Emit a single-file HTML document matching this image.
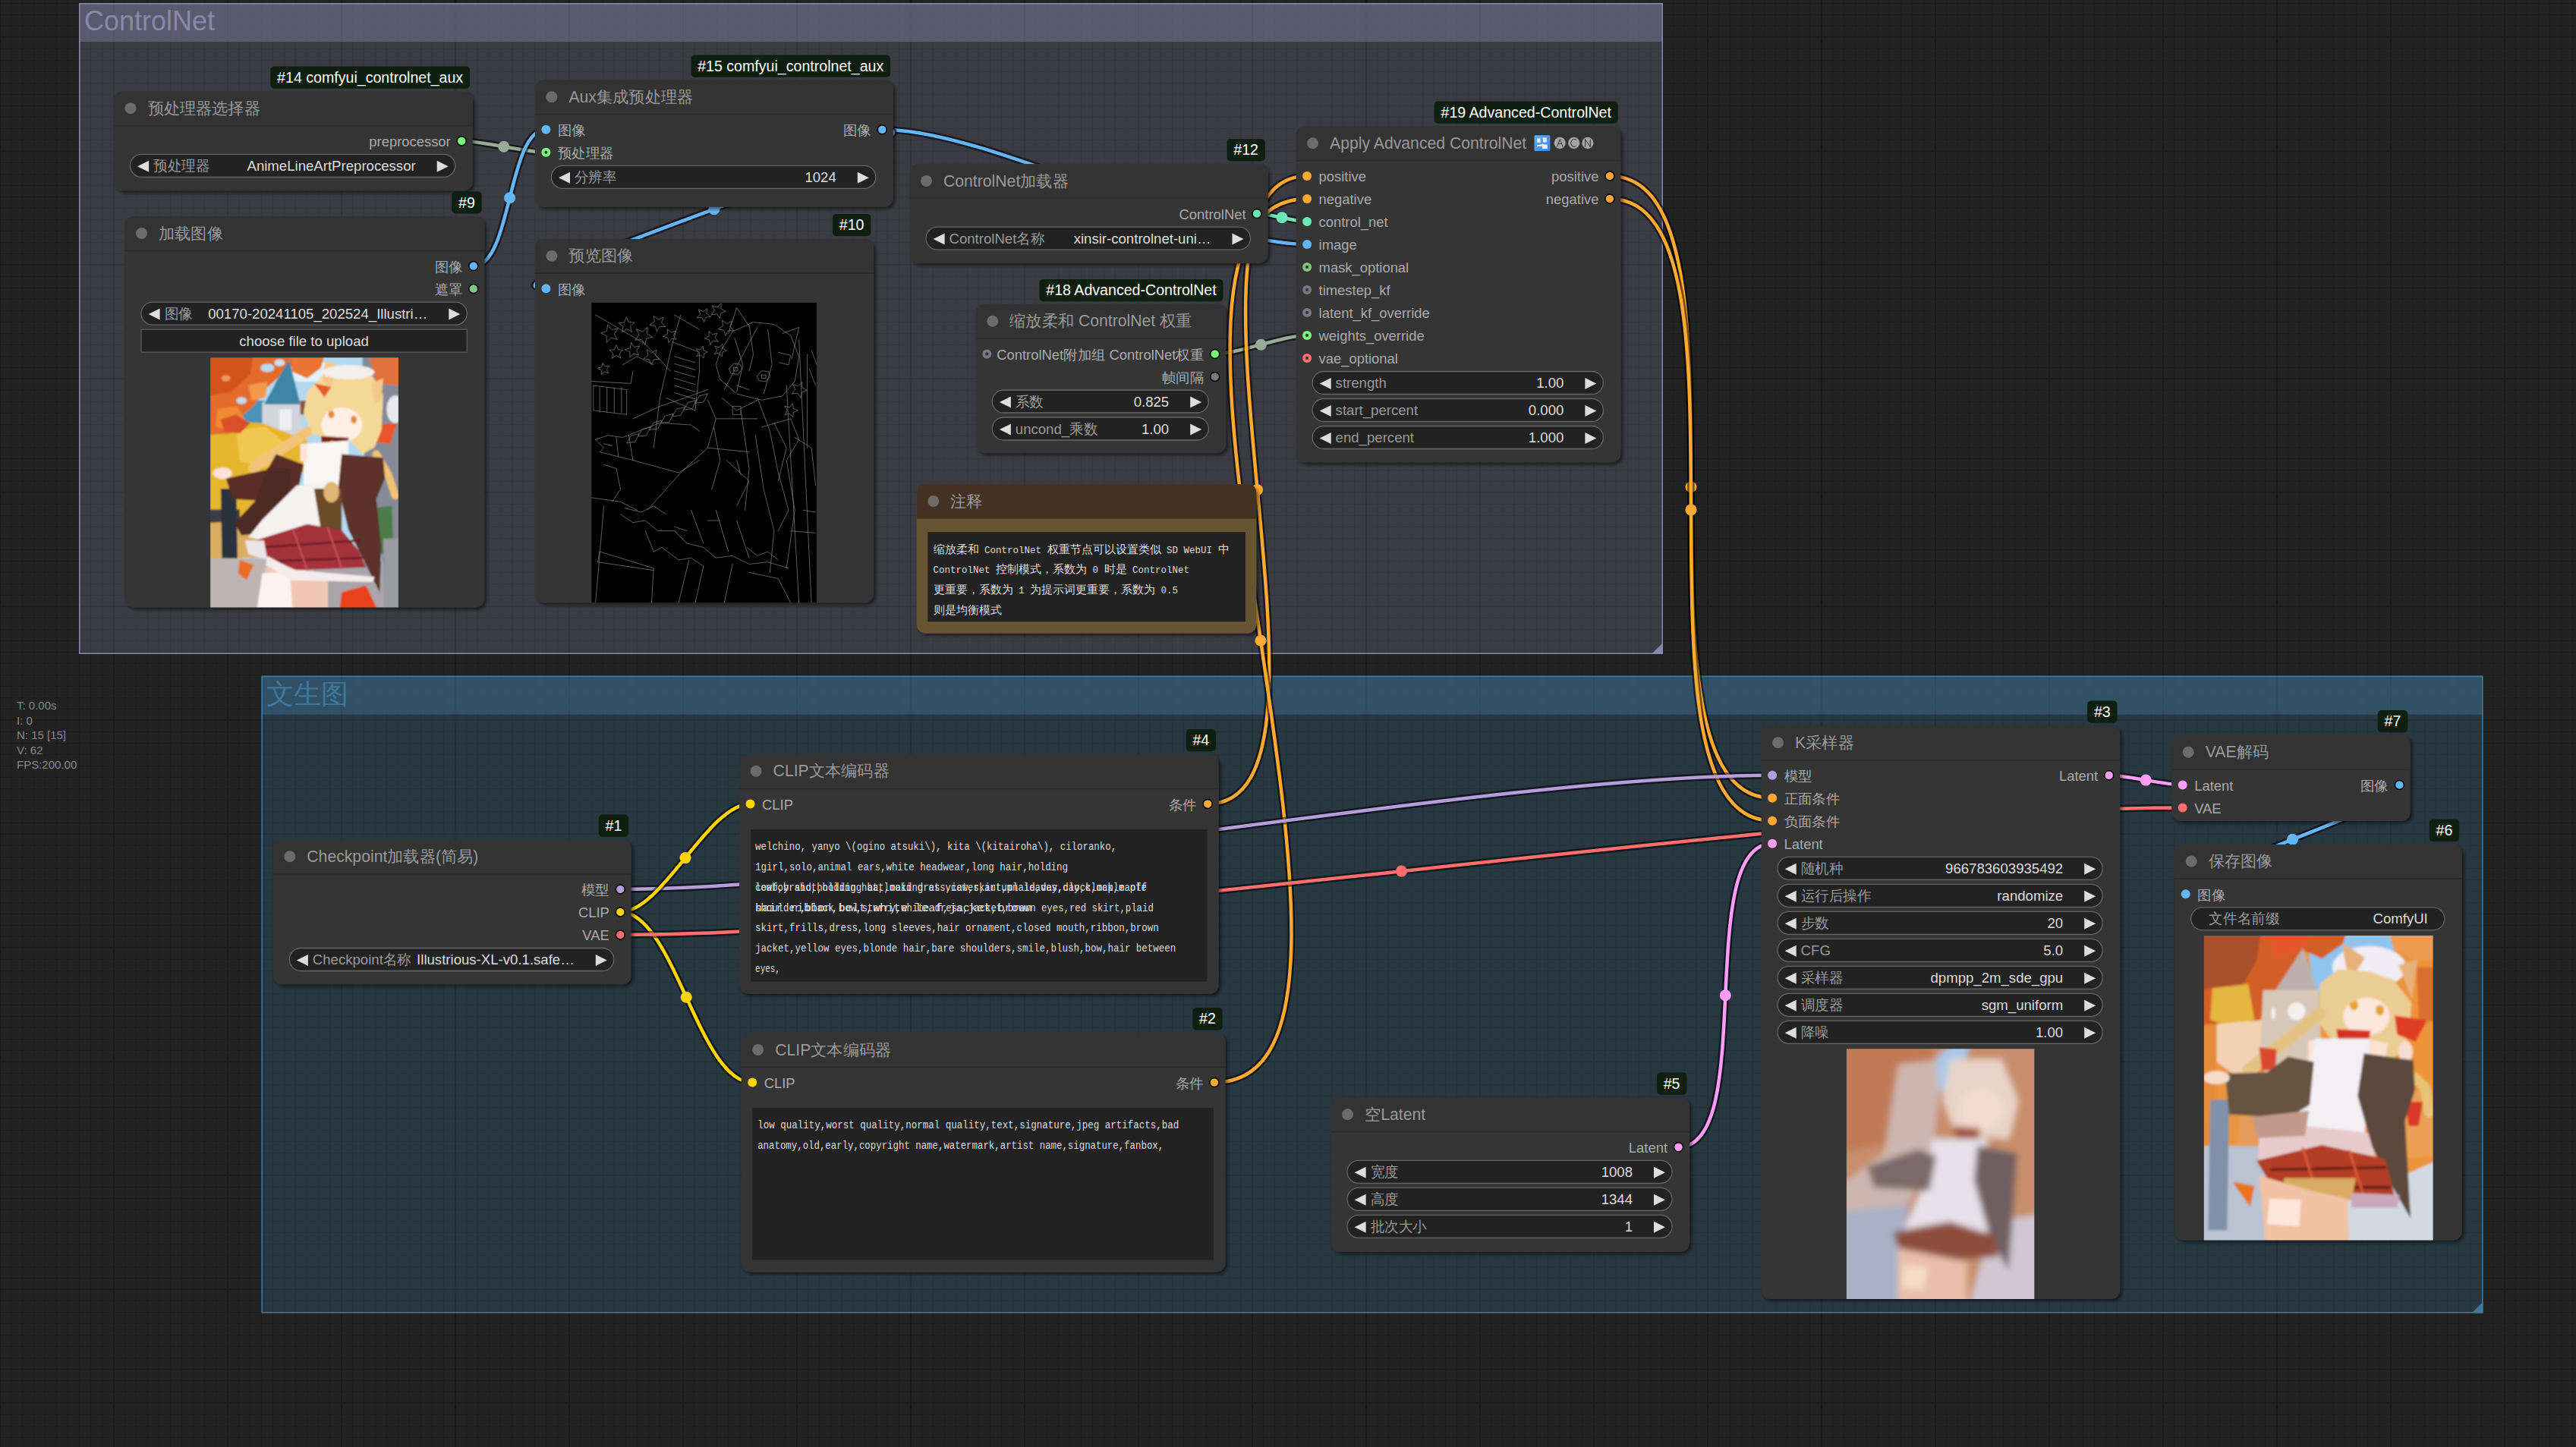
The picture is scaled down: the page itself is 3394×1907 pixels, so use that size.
<!DOCTYPE html><html><head><meta charset="utf-8"><title>ComfyUI</title><style>html,body{margin:0;padding:0;background:#222;overflow:hidden;width:3394px;height:1907px}svg{display:block}</style></head><body>
<svg width="3394" height="1907" viewBox="0 0 3394 1907">
<defs>
<pattern id="gmin" width="15" height="15" patternUnits="userSpaceOnUse" x="0" y="4"><rect x="14" y="0" width="1" height="15" fill="#1d1d1d"/><rect x="0" y="0" width="15" height="1" fill="#1d1d1d"/></pattern>
<pattern id="gmaj" width="150" height="150" patternUnits="userSpaceOnUse" x="-1" y="48"><rect x="0" y="0" width="2" height="150" fill="#1a1a1a"/><rect x="0" y="0" width="150" height="2" fill="#1a1a1a"/></pattern>
<filter id="sh" x="-10%" y="-15%" width="120%" height="130%"><feDropShadow dx="3" dy="3" stdDeviation="2.2" flood-color="#000" flood-opacity="0.5"/></filter>
</defs>
<rect width="3394" height="1907" fill="#222"/>
<rect width="3394" height="1907" fill="url(#gmin)"/>
<rect width="3394" height="1907" fill="url(#gmaj)"/>
<rect x="104" y="4" width="2087" height="858" fill="#8888AA" fill-opacity="0.25"/>
<rect x="104" y="4" width="2087" height="51" fill="#8888AA" fill-opacity="0.41"/>
<rect x="104.75" y="4.75" width="2085.5" height="856.5" fill="none" stroke="#8888AA" stroke-width="1.5"/>
<path d="M2191 847 L2191 862 L2176 862 Z" fill="#8888AA"/>
<text x="111.0" y="40.0" font-size="36" fill="#8888AA" font-family='"Liberation Sans", sans-serif'>ControlNet</text>
<rect x="344.3" y="890.6" width="2927.2" height="839.9" fill="#3f789e" fill-opacity="0.25"/>
<rect x="344.3" y="890.6" width="2927.2" height="51.10000000000002" fill="#3f789e" fill-opacity="0.41"/>
<rect x="345.05" y="891.35" width="2925.7" height="838.4" fill="none" stroke="#3f789e" stroke-width="1.5"/>
<path d="M3271.5 1715.5 L3271.5 1730.5 L3256.5 1730.5 Z" fill="#3f789e"/>
<text x="351.3" y="926.6" font-size="36" fill="#3f789e" font-family='"Liberation Sans", sans-serif'><tspan textLength="108.0" lengthAdjust="spacingAndGlyphs">文生图</tspan></text>
<text x="22.0" y="935.0" font-size="15" fill="#888" font-family='"Liberation Sans", sans-serif'>T: 0.00s</text>
<text x="22.0" y="954.5" font-size="15" fill="#888" font-family='"Liberation Sans", sans-serif'>I: 0</text>
<text x="22.0" y="974.0" font-size="15" fill="#888" font-family='"Liberation Sans", sans-serif'>N: 15 [15]</text>
<text x="22.0" y="993.5" font-size="15" fill="#888" font-family='"Liberation Sans", sans-serif'>V: 62</text>
<text x="22.0" y="1013.0" font-size="15" fill="#888" font-family='"Liberation Sans", sans-serif'>FPS:200.00</text>
<path d="M608.2 185.8 C636.3 185.8 691.3 200.8 719.4 200.8" fill="none" stroke="#000" stroke-opacity="0.55" stroke-width="9.5"/>
<path d="M608.2 185.8 C636.3 185.8 691.3 200.8 719.4 200.8" fill="none" stroke="#9A9" stroke-width="4.5"/>
<circle cx="663.8" cy="193.3" r="7.5" fill="#9A9"/>
<path d="M623.8 350.6 C674.7 350.6 668.5 170.8 719.4 170.8" fill="none" stroke="#000" stroke-opacity="0.55" stroke-width="9.5"/>
<path d="M623.8 350.6 C674.7 350.6 668.5 170.8 719.4 170.8" fill="none" stroke="#64B5F6" stroke-width="4.5"/>
<circle cx="671.6" cy="260.7" r="7.5" fill="#64B5F6"/>
<path d="M1162.3 170.8 C1307.3 170.8 1577.1 321.9 1722.1 321.9" fill="none" stroke="#000" stroke-opacity="0.55" stroke-width="9.5"/>
<path d="M1162.3 170.8 C1307.3 170.8 1577.1 321.9 1722.1 321.9" fill="none" stroke="#64B5F6" stroke-width="4.5"/>
<circle cx="1442.2" cy="246.4" r="7.5" fill="#64B5F6"/>
<path d="M1162.3 170.8 C1284.8 170.8 596.9 380.3 719.4 380.3" fill="none" stroke="#000" stroke-opacity="0.55" stroke-width="9.5"/>
<path d="M1162.3 170.8 C1284.8 170.8 596.9 380.3 719.4 380.3" fill="none" stroke="#64B5F6" stroke-width="4.5"/>
<circle cx="940.9" cy="275.6" r="7.5" fill="#64B5F6"/>
<path d="M1656.0 281.5 C1672.7 281.5 1705.4 291.9 1722.1 291.9" fill="none" stroke="#000" stroke-opacity="0.55" stroke-width="9.5"/>
<path d="M1656.0 281.5 C1672.7 281.5 1705.4 291.9 1722.1 291.9" fill="none" stroke="#6EE7B7" stroke-width="4.5"/>
<circle cx="1689.0" cy="286.7" r="7.5" fill="#6EE7B7"/>
<path d="M1600.7 466.4 C1631.7 466.4 1691.1 441.9 1722.1 441.9" fill="none" stroke="#000" stroke-opacity="0.55" stroke-width="9.5"/>
<path d="M1600.7 466.4 C1631.7 466.4 1691.1 441.9 1722.1 441.9" fill="none" stroke="#9A9" stroke-width="4.5"/>
<circle cx="1661.4" cy="454.2" r="7.5" fill="#9A9"/>
<path d="M1591.2 1059.4 C1800.6 1059.4 1512.7 231.9 1722.1 231.9" fill="none" stroke="#000" stroke-opacity="0.55" stroke-width="9.5"/>
<path d="M1591.2 1059.4 C1800.6 1059.4 1512.7 231.9 1722.1 231.9" fill="none" stroke="#FFA931" stroke-width="4.5"/>
<circle cx="1656.6" cy="645.6" r="7.5" fill="#FFA931"/>
<path d="M1599.9 1426.5 C1892.6 1426.5 1429.4 261.9 1722.1 261.9" fill="none" stroke="#000" stroke-opacity="0.55" stroke-width="9.5"/>
<path d="M1599.9 1426.5 C1892.6 1426.5 1429.4 261.9 1722.1 261.9" fill="none" stroke="#FFA931" stroke-width="4.5"/>
<circle cx="1661.0" cy="844.2" r="7.5" fill="#FFA931"/>
<path d="M2120.9 231.9 C2332.8 231.9 2123.2 1051.8 2335.1 1051.8" fill="none" stroke="#000" stroke-opacity="0.55" stroke-width="9.5"/>
<path d="M2120.9 231.9 C2332.8 231.9 2123.2 1051.8 2335.1 1051.8" fill="none" stroke="#FFA931" stroke-width="4.5"/>
<circle cx="2228.0" cy="641.8" r="7.5" fill="#FFA931"/>
<path d="M2120.9 261.9 C2332.8 261.9 2123.2 1081.8 2335.1 1081.8" fill="none" stroke="#000" stroke-opacity="0.55" stroke-width="9.5"/>
<path d="M2120.9 261.9 C2332.8 261.9 2123.2 1081.8 2335.1 1081.8" fill="none" stroke="#FFA931" stroke-width="4.5"/>
<circle cx="2228.0" cy="671.9" r="7.5" fill="#FFA931"/>
<path d="M817.3 1171.9 C1198.6 1171.9 1953.8 1021.8 2335.1 1021.8" fill="none" stroke="#000" stroke-opacity="0.55" stroke-width="9.5"/>
<path d="M817.3 1171.9 C1198.6 1171.9 1953.8 1021.8 2335.1 1021.8" fill="none" stroke="#B39DDB" stroke-width="4.5"/>
<circle cx="1576.2" cy="1096.8" r="7.5" fill="#B39DDB"/>
<path d="M817.3 1201.9 C873.0 1201.9 932.9 1059.4 988.6 1059.4" fill="none" stroke="#000" stroke-opacity="0.55" stroke-width="9.5"/>
<path d="M817.3 1201.9 C873.0 1201.9 932.9 1059.4 988.6 1059.4" fill="none" stroke="#FFD500" stroke-width="4.5"/>
<circle cx="903.0" cy="1130.6" r="7.5" fill="#FFD500"/>
<path d="M817.3 1201.9 C888.3 1201.9 920.2 1426.5 991.2 1426.5" fill="none" stroke="#000" stroke-opacity="0.55" stroke-width="9.5"/>
<path d="M817.3 1201.9 C888.3 1201.9 920.2 1426.5 991.2 1426.5" fill="none" stroke="#FFD500" stroke-width="4.5"/>
<circle cx="904.2" cy="1314.2" r="7.5" fill="#FFD500"/>
<path d="M817.3 1231.9 C1333.6 1231.9 2359.4 1064.4 2875.7 1064.4" fill="none" stroke="#000" stroke-opacity="0.55" stroke-width="9.5"/>
<path d="M817.3 1231.9 C1333.6 1231.9 2359.4 1064.4 2875.7 1064.4" fill="none" stroke="#FF6E6E" stroke-width="4.5"/>
<circle cx="1846.5" cy="1148.1" r="7.5" fill="#FF6E6E"/>
<path d="M2211.5 1511.8 C2316.2 1511.8 2230.4 1111.8 2335.1 1111.8" fill="none" stroke="#000" stroke-opacity="0.55" stroke-width="9.5"/>
<path d="M2211.5 1511.8 C2316.2 1511.8 2230.4 1111.8 2335.1 1111.8" fill="none" stroke="#FF9CF9" stroke-width="4.5"/>
<circle cx="2273.3" cy="1311.8" r="7.5" fill="#FF9CF9"/>
<path d="M2778.7 1021.8 C2803.2 1021.8 2851.2 1034.4 2875.7 1034.4" fill="none" stroke="#000" stroke-opacity="0.55" stroke-width="9.5"/>
<path d="M2778.7 1021.8 C2803.2 1021.8 2851.2 1034.4 2875.7 1034.4" fill="none" stroke="#FF9CF9" stroke-width="4.5"/>
<circle cx="2827.2" cy="1028.1" r="7.5" fill="#FF9CF9"/>
<path d="M3161.4 1034.4 C3240.5 1034.4 2800.6 1178.2 2879.7 1178.2" fill="none" stroke="#000" stroke-opacity="0.55" stroke-width="9.5"/>
<path d="M3161.4 1034.4 C3240.5 1034.4 2800.6 1178.2 2879.7 1178.2" fill="none" stroke="#64B5F6" stroke-width="4.5"/>
<circle cx="3020.5" cy="1106.3" r="7.5" fill="#64B5F6"/>
<g filter="url(#sh)"><rect x="150" y="120.5" width="472.7" height="130.9" rx="12" fill="#353535"/></g>
<path d="M150 165.5 L150 132.5 Q150 120.5 162 120.5 L610.7 120.5 Q622.7 120.5 622.7 132.5 L622.7 165.5 Z" fill="#333"/>
<rect x="150" y="165.0" width="472.7" height="1.5" fill="#2b2b2b"/>
<circle cx="172" cy="142.7" r="7.5" fill="#6b6b6b"/>
<text x="194.5" y="149.8" font-size="21.2" fill="#999" font-family='"Liberation Sans", sans-serif'><tspan textLength="148.4" lengthAdjust="spacingAndGlyphs">预处理器选择器</tspan></text>
<circle cx="608.2" cy="185.8" r="6" fill="#7F7" stroke="#000" stroke-width="1.5"/>
<text x="593.7" y="193.1" font-size="18.4" fill="#AAA" text-anchor="end" font-family='"Liberation Sans", sans-serif'>preprocessor</text>
<rect x="171.5" y="203.4" width="428.2" height="30" rx="15" fill="#222" stroke="#666" stroke-width="1.3"/>
<path d="M181.1 219.3 L196.1 211.8 L196.1 226.8 Z" fill="#DDD"/>
<path d="M590.7 219.3 L575.7 211.8 L575.7 226.8 Z" fill="#DDD"/>
<text x="202.0" y="224.9" font-size="18.6" fill="#999" font-family='"Liberation Sans", sans-serif'><tspan textLength="74.4" lengthAdjust="spacingAndGlyphs">预处理器</tspan></text>
<text x="547.7" y="224.9" font-size="18.6" fill="#DDD" text-anchor="end" font-family='"Liberation Sans", sans-serif'>AnimeLineArtPreprocessor</text>
<rect x="356.3" y="87.4" width="262.7" height="29.3" rx="5" fill="#0F1F0F"/>
<text x="365.1" y="108.7" font-size="19.6" fill="#FFF" font-family='"Liberation Sans", sans-serif'>#14 comfyui_controlnet_aux</text>
<g filter="url(#sh)"><rect x="164.5" y="285.3" width="473.8" height="515.1" rx="12" fill="#353535"/></g>
<path d="M164.5 330.3 L164.5 297.3 Q164.5 285.3 176.5 285.3 L626.3 285.3 Q638.3 285.3 638.3 297.3 L638.3 330.3 Z" fill="#333"/>
<rect x="164.5" y="329.8" width="473.8" height="1.5" fill="#2b2b2b"/>
<circle cx="186.5" cy="307.5" r="7.5" fill="#6b6b6b"/>
<text x="209.0" y="314.6" font-size="21.2" fill="#999" font-family='"Liberation Sans", sans-serif'><tspan textLength="84.8" lengthAdjust="spacingAndGlyphs">加载图像</tspan></text>
<circle cx="623.8" cy="350.6" r="6" fill="#64B5F6" stroke="#000" stroke-width="1.5"/>
<text x="609.3" y="357.9" font-size="18.4" fill="#AAA" text-anchor="end" font-family='"Liberation Sans", sans-serif'><tspan textLength="36.8" lengthAdjust="spacingAndGlyphs">图像</tspan></text>
<circle cx="623.8" cy="380.6" r="6" fill="#81C784" stroke="#000" stroke-width="1.5"/>
<text x="609.3" y="387.9" font-size="18.4" fill="#AAA" text-anchor="end" font-family='"Liberation Sans", sans-serif'><tspan textLength="36.8" lengthAdjust="spacingAndGlyphs">遮罩</tspan></text>
<rect x="186.0" y="398.2" width="429.3" height="30" rx="15" fill="#222" stroke="#666" stroke-width="1.3"/>
<path d="M195.6 414.1 L210.6 406.6 L210.6 421.6 Z" fill="#DDD"/>
<path d="M606.3 414.1 L591.3 406.6 L591.3 421.6 Z" fill="#DDD"/>
<text x="216.5" y="419.7" font-size="18.6" fill="#999" font-family='"Liberation Sans", sans-serif'><tspan textLength="37.2" lengthAdjust="spacingAndGlyphs">图像</tspan></text>
<text x="563.3" y="419.7" font-size="18.6" fill="#DDD" text-anchor="end" font-family='"Liberation Sans", sans-serif'>00170-20241105_202524_Illustri…</text>
<rect x="186.0" y="434.2" width="429.3" height="30" fill="#222" stroke="#555" stroke-width="1.5"/>
<text x="400.6" y="455.7" font-size="18.6" fill="#DDD" text-anchor="middle" font-family='"Liberation Sans", sans-serif'>choose file to upload</text>
<rect x="595.2" y="252.2" width="39.4" height="29.3" rx="5" fill="#0F1F0F"/>
<text x="604.0" y="273.5" font-size="19.6" fill="#FFF" font-family='"Liberation Sans", sans-serif'>#9</text>
<g filter="url(#sh)"><rect x="704.9" y="105.5" width="471.9" height="167.2" rx="12" fill="#353535"/></g>
<path d="M704.9 150.5 L704.9 117.5 Q704.9 105.5 716.9 105.5 L1164.8 105.5 Q1176.8 105.5 1176.8 117.5 L1176.8 150.5 Z" fill="#333"/>
<rect x="704.9" y="150.0" width="471.9" height="1.5" fill="#2b2b2b"/>
<circle cx="726.9" cy="127.7" r="7.5" fill="#6b6b6b"/>
<text x="749.4" y="134.8" font-size="21.2" fill="#999" font-family='"Liberation Sans", sans-serif'>Aux<tspan textLength="127.2" lengthAdjust="spacingAndGlyphs">集成预处理器</tspan></text>
<circle cx="719.4" cy="170.8" r="6" fill="#64B5F6"/>
<text x="734.9" y="178.1" font-size="18.4" fill="#AAA" font-family='"Liberation Sans", sans-serif'><tspan textLength="36.8" lengthAdjust="spacingAndGlyphs">图像</tspan></text>
<circle cx="719.4" cy="200.8" r="6" fill="#7F7"/><circle cx="719.4" cy="200.8" r="2.1" fill="#353535"/>
<text x="734.9" y="208.1" font-size="18.4" fill="#AAA" font-family='"Liberation Sans", sans-serif'><tspan textLength="73.6" lengthAdjust="spacingAndGlyphs">预处理器</tspan></text>
<circle cx="1162.3" cy="170.8" r="6" fill="#64B5F6" stroke="#000" stroke-width="1.5"/>
<text x="1147.8" y="178.1" font-size="18.4" fill="#AAA" text-anchor="end" font-family='"Liberation Sans", sans-serif'><tspan textLength="36.8" lengthAdjust="spacingAndGlyphs">图像</tspan></text>
<rect x="726.4" y="218.4" width="427.4" height="30" rx="15" fill="#222" stroke="#666" stroke-width="1.3"/>
<path d="M736.0 234.3 L751.0 226.8 L751.0 241.8 Z" fill="#DDD"/>
<path d="M1144.8 234.3 L1129.8 226.8 L1129.8 241.8 Z" fill="#DDD"/>
<text x="756.9" y="239.9" font-size="18.6" fill="#999" font-family='"Liberation Sans", sans-serif'><tspan textLength="55.8" lengthAdjust="spacingAndGlyphs">分辨率</tspan></text>
<text x="1101.8" y="239.9" font-size="18.6" fill="#DDD" text-anchor="end" font-family='"Liberation Sans", sans-serif'>1024</text>
<rect x="910.4" y="72.4" width="262.7" height="29.3" rx="5" fill="#0F1F0F"/>
<text x="919.2" y="93.7" font-size="19.6" fill="#FFF" font-family='"Liberation Sans", sans-serif'>#15 comfyui_controlnet_aux</text>
<g filter="url(#sh)"><rect x="704.9" y="315" width="446.1" height="479.6" rx="12" fill="#353535"/></g>
<path d="M704.9 360 L704.9 327 Q704.9 315 716.9 315 L1139 315 Q1151 315 1151 327 L1151 360 Z" fill="#333"/>
<rect x="704.9" y="359.5" width="446.1" height="1.5" fill="#2b2b2b"/>
<circle cx="726.9" cy="337.2" r="7.5" fill="#6b6b6b"/>
<text x="749.4" y="344.3" font-size="21.2" fill="#999" font-family='"Liberation Sans", sans-serif'><tspan textLength="84.8" lengthAdjust="spacingAndGlyphs">预览图像</tspan></text>
<circle cx="719.4" cy="380.3" r="6" fill="#64B5F6"/>
<text x="734.9" y="387.6" font-size="18.4" fill="#AAA" font-family='"Liberation Sans", sans-serif'><tspan textLength="36.8" lengthAdjust="spacingAndGlyphs">图像</tspan></text>
<rect x="1097.0" y="281.9" width="50.3" height="29.3" rx="5" fill="#0F1F0F"/>
<text x="1105.8" y="303.2" font-size="19.6" fill="#FFF" font-family='"Liberation Sans", sans-serif'>#10</text>
<g filter="url(#sh)"><rect x="1198.5" y="216.2" width="472.0" height="130.8" rx="12" fill="#353535"/></g>
<path d="M1198.5 261.2 L1198.5 228.2 Q1198.5 216.2 1210.5 216.2 L1658.5 216.2 Q1670.5 216.2 1670.5 228.2 L1670.5 261.2 Z" fill="#333"/>
<rect x="1198.5" y="260.7" width="472.0" height="1.5" fill="#2b2b2b"/>
<circle cx="1220.5" cy="238.39999999999998" r="7.5" fill="#6b6b6b"/>
<text x="1243.0" y="245.5" font-size="21.2" fill="#999" font-family='"Liberation Sans", sans-serif'>ControlNet<tspan textLength="63.6" lengthAdjust="spacingAndGlyphs">加载器</tspan></text>
<circle cx="1656.0" cy="281.5" r="6" fill="#6EE7B7" stroke="#000" stroke-width="1.5"/>
<text x="1641.5" y="288.8" font-size="18.4" fill="#AAA" text-anchor="end" font-family='"Liberation Sans", sans-serif'>ControlNet</text>
<rect x="1220.0" y="299.1" width="427.5" height="30" rx="15" fill="#222" stroke="#666" stroke-width="1.3"/>
<path d="M1229.6 315.0 L1244.6 307.5 L1244.6 322.5 Z" fill="#DDD"/>
<path d="M1638.5 315.0 L1623.5 307.5 L1623.5 322.5 Z" fill="#DDD"/>
<text x="1250.5" y="320.6" font-size="18.6" fill="#999" font-family='"Liberation Sans", sans-serif'>ControlNet<tspan textLength="37.2" lengthAdjust="spacingAndGlyphs">名称</tspan></text>
<text x="1595.5" y="320.6" font-size="18.6" fill="#DDD" text-anchor="end" font-family='"Liberation Sans", sans-serif'>xinsir-controlnet-uni…</text>
<rect x="1616.5" y="183.1" width="50.3" height="29.3" rx="5" fill="#0F1F0F"/>
<text x="1625.3" y="204.4" font-size="19.6" fill="#FFF" font-family='"Liberation Sans", sans-serif'>#12</text>
<g filter="url(#sh)"><rect x="1285.8" y="401.1" width="329.4" height="196.2" rx="12" fill="#353535"/></g>
<path d="M1285.8 446.1 L1285.8 413.1 Q1285.8 401.1 1297.8 401.1 L1603.2 401.1 Q1615.2 401.1 1615.2 413.1 L1615.2 446.1 Z" fill="#333"/>
<rect x="1285.8" y="445.6" width="329.4" height="1.5" fill="#2b2b2b"/>
<circle cx="1307.8" cy="423.3" r="7.5" fill="#6b6b6b"/>
<text x="1330.3" y="430.4" font-size="21.2" fill="#999" font-family='"Liberation Sans", sans-serif'><tspan textLength="84.8" lengthAdjust="spacingAndGlyphs">缩放柔和</tspan> ControlNet <tspan textLength="42.4" lengthAdjust="spacingAndGlyphs">权重</tspan></text>
<circle cx="1300.3" cy="466.4" r="6" fill="#778"/><circle cx="1300.3" cy="466.4" r="2.1" fill="#353535"/>
<circle cx="1600.7" cy="466.4" r="6" fill="#7F7" stroke="#000" stroke-width="1.5"/>
<text x="1586.2" y="473.7" font-size="18.4" fill="#AAA" text-anchor="end" font-family='"Liberation Sans", sans-serif'>ControlNet<tspan textLength="55.2" lengthAdjust="spacingAndGlyphs">附加组</tspan> ControlNet<tspan textLength="36.8" lengthAdjust="spacingAndGlyphs">权重</tspan></text>
<circle cx="1600.7" cy="496.4" r="6" fill="#778" stroke="#000" stroke-width="1.5"/>
<text x="1586.2" y="503.7" font-size="18.4" fill="#AAA" text-anchor="end" font-family='"Liberation Sans", sans-serif'><tspan textLength="55.2" lengthAdjust="spacingAndGlyphs">帧间隔</tspan></text>
<rect x="1307.3" y="514.0" width="284.9" height="30" rx="15" fill="#222" stroke="#666" stroke-width="1.3"/>
<path d="M1316.9 529.9 L1331.9 522.4 L1331.9 537.4 Z" fill="#DDD"/>
<path d="M1583.2 529.9 L1568.2 522.4 L1568.2 537.4 Z" fill="#DDD"/>
<text x="1337.8" y="535.5" font-size="18.6" fill="#999" font-family='"Liberation Sans", sans-serif'><tspan textLength="37.2" lengthAdjust="spacingAndGlyphs">系数</tspan></text>
<text x="1540.2" y="535.5" font-size="18.6" fill="#DDD" text-anchor="end" font-family='"Liberation Sans", sans-serif'>0.825</text>
<rect x="1307.3" y="550.0" width="284.9" height="30" rx="15" fill="#222" stroke="#666" stroke-width="1.3"/>
<path d="M1316.9 565.9 L1331.9 558.4 L1331.9 573.4 Z" fill="#DDD"/>
<path d="M1583.2 565.9 L1568.2 558.4 L1568.2 573.4 Z" fill="#DDD"/>
<text x="1337.8" y="571.5" font-size="18.6" fill="#999" font-family='"Liberation Sans", sans-serif'>uncond_<tspan textLength="37.2" lengthAdjust="spacingAndGlyphs">乘数</tspan></text>
<text x="1540.2" y="571.5" font-size="18.6" fill="#DDD" text-anchor="end" font-family='"Liberation Sans", sans-serif'>1.00</text>
<rect x="1369.5" y="368.0" width="242.0" height="29.3" rx="5" fill="#0F1F0F"/>
<text x="1378.3" y="389.3" font-size="19.6" fill="#FFF" font-family='"Liberation Sans", sans-serif'>#18 Advanced-ControlNet</text>
<g filter="url(#sh)"><rect x="1707.6" y="166.6" width="427.8" height="443.0" rx="12" fill="#353535"/></g>
<path d="M1707.6 211.6 L1707.6 178.6 Q1707.6 166.6 1719.6 166.6 L2123.4 166.6 Q2135.4 166.6 2135.4 178.6 L2135.4 211.6 Z" fill="#333"/>
<rect x="1707.6" y="211.1" width="427.8" height="1.5" fill="#2b2b2b"/>
<circle cx="1729.6" cy="188.79999999999998" r="7.5" fill="#6b6b6b"/>
<text x="1752.1" y="195.9" font-size="21.2" fill="#999" font-family='"Liberation Sans", sans-serif'>Apply Advanced ControlNet</text>
<circle cx="1722.1" cy="231.9" r="6" fill="#FFA931"/>
<text x="1737.6" y="239.2" font-size="18.4" fill="#AAA" font-family='"Liberation Sans", sans-serif'>positive</text>
<circle cx="1722.1" cy="261.9" r="6" fill="#FFA931"/>
<text x="1737.6" y="269.2" font-size="18.4" fill="#AAA" font-family='"Liberation Sans", sans-serif'>negative</text>
<circle cx="1722.1" cy="291.9" r="6" fill="#6EE7B7"/>
<text x="1737.6" y="299.2" font-size="18.4" fill="#AAA" font-family='"Liberation Sans", sans-serif'>control_net</text>
<circle cx="1722.1" cy="321.9" r="6" fill="#64B5F6"/>
<text x="1737.6" y="329.2" font-size="18.4" fill="#AAA" font-family='"Liberation Sans", sans-serif'>image</text>
<circle cx="1722.1" cy="351.9" r="6" fill="#81C784"/><circle cx="1722.1" cy="351.9" r="2.1" fill="#353535"/>
<text x="1737.6" y="359.2" font-size="18.4" fill="#AAA" font-family='"Liberation Sans", sans-serif'>mask_optional</text>
<circle cx="1722.1" cy="381.9" r="6" fill="#778"/><circle cx="1722.1" cy="381.9" r="2.1" fill="#353535"/>
<text x="1737.6" y="389.2" font-size="18.4" fill="#AAA" font-family='"Liberation Sans", sans-serif'>timestep_kf</text>
<circle cx="1722.1" cy="411.9" r="6" fill="#778"/><circle cx="1722.1" cy="411.9" r="2.1" fill="#353535"/>
<text x="1737.6" y="419.2" font-size="18.4" fill="#AAA" font-family='"Liberation Sans", sans-serif'>latent_kf_override</text>
<circle cx="1722.1" cy="441.9" r="6" fill="#7F7"/><circle cx="1722.1" cy="441.9" r="2.1" fill="#353535"/>
<text x="1737.6" y="449.2" font-size="18.4" fill="#AAA" font-family='"Liberation Sans", sans-serif'>weights_override</text>
<circle cx="1722.1" cy="471.9" r="6" fill="#FF6E6E"/><circle cx="1722.1" cy="471.9" r="2.1" fill="#353535"/>
<text x="1737.6" y="479.2" font-size="18.4" fill="#AAA" font-family='"Liberation Sans", sans-serif'>vae_optional</text>
<circle cx="2120.9" cy="231.9" r="6" fill="#FFA931" stroke="#000" stroke-width="1.5"/>
<text x="2106.4" y="239.2" font-size="18.4" fill="#AAA" text-anchor="end" font-family='"Liberation Sans", sans-serif'>positive</text>
<circle cx="2120.9" cy="261.9" r="6" fill="#FFA931" stroke="#000" stroke-width="1.5"/>
<text x="2106.4" y="269.2" font-size="18.4" fill="#AAA" text-anchor="end" font-family='"Liberation Sans", sans-serif'>negative</text>
<rect x="1729.1" y="489.5" width="383.3" height="30" rx="15" fill="#222" stroke="#666" stroke-width="1.3"/>
<path d="M1738.7 505.4 L1753.7 497.9 L1753.7 512.9 Z" fill="#DDD"/>
<path d="M2103.4 505.4 L2088.4 497.9 L2088.4 512.9 Z" fill="#DDD"/>
<text x="1759.6" y="511.0" font-size="18.6" fill="#999" font-family='"Liberation Sans", sans-serif'>strength</text>
<text x="2060.4" y="511.0" font-size="18.6" fill="#DDD" text-anchor="end" font-family='"Liberation Sans", sans-serif'>1.00</text>
<rect x="1729.1" y="525.5" width="383.3" height="30" rx="15" fill="#222" stroke="#666" stroke-width="1.3"/>
<path d="M1738.7 541.4 L1753.7 533.9 L1753.7 548.9 Z" fill="#DDD"/>
<path d="M2103.4 541.4 L2088.4 533.9 L2088.4 548.9 Z" fill="#DDD"/>
<text x="1759.6" y="547.0" font-size="18.6" fill="#999" font-family='"Liberation Sans", sans-serif'>start_percent</text>
<text x="2060.4" y="547.0" font-size="18.6" fill="#DDD" text-anchor="end" font-family='"Liberation Sans", sans-serif'>0.000</text>
<rect x="1729.1" y="561.5" width="383.3" height="30" rx="15" fill="#222" stroke="#666" stroke-width="1.3"/>
<path d="M1738.7 577.4 L1753.7 569.9 L1753.7 584.9 Z" fill="#DDD"/>
<path d="M2103.4 577.4 L2088.4 569.9 L2088.4 584.9 Z" fill="#DDD"/>
<text x="1759.6" y="583.0" font-size="18.6" fill="#999" font-family='"Liberation Sans", sans-serif'>end_percent</text>
<text x="2060.4" y="583.0" font-size="18.6" fill="#DDD" text-anchor="end" font-family='"Liberation Sans", sans-serif'>1.000</text>
<rect x="1889.7" y="133.5" width="242.0" height="29.3" rx="5" fill="#0F1F0F"/>
<text x="1898.5" y="154.8" font-size="19.6" fill="#FFF" font-family='"Liberation Sans", sans-serif'>#19 Advanced-ControlNet</text>
<g filter="url(#sh)"><rect x="359.8" y="1106.6" width="472.0" height="191.0" rx="12" fill="#353535"/></g>
<path d="M359.8 1151.6 L359.8 1118.6 Q359.8 1106.6 371.8 1106.6 L819.8 1106.6 Q831.8 1106.6 831.8 1118.6 L831.8 1151.6 Z" fill="#333"/>
<rect x="359.8" y="1151.1" width="472.0" height="1.5" fill="#2b2b2b"/>
<circle cx="381.8" cy="1128.8" r="7.5" fill="#6b6b6b"/>
<text x="404.3" y="1135.9" font-size="21.2" fill="#999" font-family='"Liberation Sans", sans-serif'>Checkpoint<tspan textLength="63.6" lengthAdjust="spacingAndGlyphs">加载器</tspan>(<tspan textLength="42.4" lengthAdjust="spacingAndGlyphs">简易</tspan>)</text>
<circle cx="817.3" cy="1171.9" r="6" fill="#B39DDB" stroke="#000" stroke-width="1.5"/>
<text x="802.8" y="1179.2" font-size="18.4" fill="#AAA" text-anchor="end" font-family='"Liberation Sans", sans-serif'><tspan textLength="36.8" lengthAdjust="spacingAndGlyphs">模型</tspan></text>
<circle cx="817.3" cy="1201.9" r="6" fill="#FFD500" stroke="#000" stroke-width="1.5"/>
<text x="802.8" y="1209.2" font-size="18.4" fill="#AAA" text-anchor="end" font-family='"Liberation Sans", sans-serif'>CLIP</text>
<circle cx="817.3" cy="1231.9" r="6" fill="#FF6E6E" stroke="#000" stroke-width="1.5"/>
<text x="802.8" y="1239.2" font-size="18.4" fill="#AAA" text-anchor="end" font-family='"Liberation Sans", sans-serif'>VAE</text>
<rect x="381.3" y="1249.5" width="427.5" height="30" rx="15" fill="#222" stroke="#666" stroke-width="1.3"/>
<path d="M390.9 1265.4 L405.9 1257.9 L405.9 1272.9 Z" fill="#DDD"/>
<path d="M799.8 1265.4 L784.8 1257.9 L784.8 1272.9 Z" fill="#DDD"/>
<text x="411.8" y="1271.0" font-size="18.6" fill="#999" font-family='"Liberation Sans", sans-serif'>Checkpoint<tspan textLength="37.2" lengthAdjust="spacingAndGlyphs">名称</tspan></text>
<text x="756.8" y="1271.0" font-size="18.6" fill="#DDD" text-anchor="end" font-family='"Liberation Sans", sans-serif'>Illustrious-XL-v0.1.safe…</text>
<rect x="788.7" y="1073.5" width="39.4" height="29.3" rx="5" fill="#0F1F0F"/>
<text x="797.5" y="1094.8" font-size="19.6" fill="#FFF" font-family='"Liberation Sans", sans-serif'>#1</text>
<g filter="url(#sh)"><rect x="974.1" y="994.1" width="631.6" height="315.6" rx="12" fill="#353535"/></g>
<path d="M974.1 1039.1 L974.1 1006.1 Q974.1 994.1 986.1 994.1 L1593.7 994.1 Q1605.7 994.1 1605.7 1006.1 L1605.7 1039.1 Z" fill="#333"/>
<rect x="974.1" y="1038.6" width="631.6" height="1.5" fill="#2b2b2b"/>
<circle cx="996.1" cy="1016.3000000000001" r="7.5" fill="#6b6b6b"/>
<text x="1018.6" y="1023.4" font-size="21.2" fill="#999" font-family='"Liberation Sans", sans-serif'>CLIP<tspan textLength="106.0" lengthAdjust="spacingAndGlyphs">文本编码器</tspan></text>
<circle cx="988.6" cy="1059.4" r="6" fill="#FFD500"/>
<text x="1004.1" y="1066.7" font-size="18.4" fill="#AAA" font-family='"Liberation Sans", sans-serif'>CLIP</text>
<circle cx="1591.2" cy="1059.4" r="6" fill="#FFA931" stroke="#000" stroke-width="1.5"/>
<text x="1576.7" y="1066.7" font-size="18.4" fill="#AAA" text-anchor="end" font-family='"Liberation Sans", sans-serif'><tspan textLength="36.8" lengthAdjust="spacingAndGlyphs">条件</tspan></text>
<rect x="1562.6" y="961.0" width="39.4" height="29.3" rx="5" fill="#0F1F0F"/>
<text x="1571.4" y="982.3" font-size="19.6" fill="#FFF" font-family='"Liberation Sans", sans-serif'>#4</text>
<g filter="url(#sh)"><rect x="976.7" y="1361.2" width="637.7" height="315.3" rx="12" fill="#353535"/></g>
<path d="M976.7 1406.2 L976.7 1373.2 Q976.7 1361.2 988.7 1361.2 L1602.4 1361.2 Q1614.4 1361.2 1614.4 1373.2 L1614.4 1406.2 Z" fill="#333"/>
<rect x="976.7" y="1405.7" width="637.7" height="1.5" fill="#2b2b2b"/>
<circle cx="998.7" cy="1383.4" r="7.5" fill="#6b6b6b"/>
<text x="1021.2" y="1390.5" font-size="21.2" fill="#999" font-family='"Liberation Sans", sans-serif'>CLIP<tspan textLength="106.0" lengthAdjust="spacingAndGlyphs">文本编码器</tspan></text>
<circle cx="991.2" cy="1426.5" r="6" fill="#FFD500"/>
<text x="1006.7" y="1433.8" font-size="18.4" fill="#AAA" font-family='"Liberation Sans", sans-serif'>CLIP</text>
<circle cx="1599.9" cy="1426.5" r="6" fill="#FFA931" stroke="#000" stroke-width="1.5"/>
<text x="1585.4" y="1433.8" font-size="18.4" fill="#AAA" text-anchor="end" font-family='"Liberation Sans", sans-serif'><tspan textLength="36.8" lengthAdjust="spacingAndGlyphs">条件</tspan></text>
<rect x="1571.3" y="1328.1" width="39.4" height="29.3" rx="5" fill="#0F1F0F"/>
<text x="1580.1" y="1349.4" font-size="19.6" fill="#FFF" font-family='"Liberation Sans", sans-serif'>#2</text>
<g filter="url(#sh)"><rect x="1753.5" y="1446.5" width="472.5" height="203.4" rx="12" fill="#353535"/></g>
<path d="M1753.5 1491.5 L1753.5 1458.5 Q1753.5 1446.5 1765.5 1446.5 L2214 1446.5 Q2226 1446.5 2226 1458.5 L2226 1491.5 Z" fill="#333"/>
<rect x="1753.5" y="1491.0" width="472.5" height="1.5" fill="#2b2b2b"/>
<circle cx="1775.5" cy="1468.7" r="7.5" fill="#6b6b6b"/>
<text x="1798.0" y="1475.8" font-size="21.2" fill="#999" font-family='"Liberation Sans", sans-serif'><tspan textLength="21.2" lengthAdjust="spacingAndGlyphs">空</tspan>Latent</text>
<circle cx="2211.5" cy="1511.8" r="6" fill="#FF9CF9" stroke="#000" stroke-width="1.5"/>
<text x="2197.0" y="1519.1" font-size="18.4" fill="#AAA" text-anchor="end" font-family='"Liberation Sans", sans-serif'>Latent</text>
<rect x="1775.0" y="1529.4" width="428.0" height="30" rx="15" fill="#222" stroke="#666" stroke-width="1.3"/>
<path d="M1784.6 1545.3 L1799.6 1537.8 L1799.6 1552.8 Z" fill="#DDD"/>
<path d="M2194.0 1545.3 L2179.0 1537.8 L2179.0 1552.8 Z" fill="#DDD"/>
<text x="1805.5" y="1550.9" font-size="18.6" fill="#999" font-family='"Liberation Sans", sans-serif'><tspan textLength="37.2" lengthAdjust="spacingAndGlyphs">宽度</tspan></text>
<text x="2151.0" y="1550.9" font-size="18.6" fill="#DDD" text-anchor="end" font-family='"Liberation Sans", sans-serif'>1008</text>
<rect x="1775.0" y="1565.4" width="428.0" height="30" rx="15" fill="#222" stroke="#666" stroke-width="1.3"/>
<path d="M1784.6 1581.3 L1799.6 1573.8 L1799.6 1588.8 Z" fill="#DDD"/>
<path d="M2194.0 1581.3 L2179.0 1573.8 L2179.0 1588.8 Z" fill="#DDD"/>
<text x="1805.5" y="1586.9" font-size="18.6" fill="#999" font-family='"Liberation Sans", sans-serif'><tspan textLength="37.2" lengthAdjust="spacingAndGlyphs">高度</tspan></text>
<text x="2151.0" y="1586.9" font-size="18.6" fill="#DDD" text-anchor="end" font-family='"Liberation Sans", sans-serif'>1344</text>
<rect x="1775.0" y="1601.4" width="428.0" height="30" rx="15" fill="#222" stroke="#666" stroke-width="1.3"/>
<path d="M1784.6 1617.3 L1799.6 1609.8 L1799.6 1624.8 Z" fill="#DDD"/>
<path d="M2194.0 1617.3 L2179.0 1609.8 L2179.0 1624.8 Z" fill="#DDD"/>
<text x="1805.5" y="1622.9" font-size="18.6" fill="#999" font-family='"Liberation Sans", sans-serif'><tspan textLength="74.4" lengthAdjust="spacingAndGlyphs">批次大小</tspan></text>
<text x="2151.0" y="1622.9" font-size="18.6" fill="#DDD" text-anchor="end" font-family='"Liberation Sans", sans-serif'>1</text>
<rect x="2182.9" y="1413.4" width="39.4" height="29.3" rx="5" fill="#0F1F0F"/>
<text x="2191.7" y="1434.7" font-size="19.6" fill="#FFF" font-family='"Liberation Sans", sans-serif'>#5</text>
<g filter="url(#sh)"><rect x="2320.6" y="956.5" width="472.6" height="755.4" rx="12" fill="#353535"/></g>
<path d="M2320.6 1001.5 L2320.6 968.5 Q2320.6 956.5 2332.6 956.5 L2781.2 956.5 Q2793.2 956.5 2793.2 968.5 L2793.2 1001.5 Z" fill="#333"/>
<rect x="2320.6" y="1001.0" width="472.6" height="1.5" fill="#2b2b2b"/>
<circle cx="2342.6" cy="978.7" r="7.5" fill="#6b6b6b"/>
<text x="2365.1" y="985.8" font-size="21.2" fill="#999" font-family='"Liberation Sans", sans-serif'>K<tspan textLength="63.6" lengthAdjust="spacingAndGlyphs">采样器</tspan></text>
<circle cx="2335.1" cy="1021.8" r="6" fill="#B39DDB"/>
<text x="2350.6" y="1029.1" font-size="18.4" fill="#AAA" font-family='"Liberation Sans", sans-serif'><tspan textLength="36.8" lengthAdjust="spacingAndGlyphs">模型</tspan></text>
<circle cx="2335.1" cy="1051.8" r="6" fill="#FFA931"/>
<text x="2350.6" y="1059.1" font-size="18.4" fill="#AAA" font-family='"Liberation Sans", sans-serif'><tspan textLength="73.6" lengthAdjust="spacingAndGlyphs">正面条件</tspan></text>
<circle cx="2335.1" cy="1081.8" r="6" fill="#FFA931"/>
<text x="2350.6" y="1089.1" font-size="18.4" fill="#AAA" font-family='"Liberation Sans", sans-serif'><tspan textLength="73.6" lengthAdjust="spacingAndGlyphs">负面条件</tspan></text>
<circle cx="2335.1" cy="1111.8" r="6" fill="#FF9CF9"/>
<text x="2350.6" y="1119.1" font-size="18.4" fill="#AAA" font-family='"Liberation Sans", sans-serif'>Latent</text>
<circle cx="2778.7" cy="1021.8" r="6" fill="#FF9CF9" stroke="#000" stroke-width="1.5"/>
<text x="2764.2" y="1029.1" font-size="18.4" fill="#AAA" text-anchor="end" font-family='"Liberation Sans", sans-serif'>Latent</text>
<rect x="2342.1" y="1129.4" width="428.1" height="30" rx="15" fill="#222" stroke="#666" stroke-width="1.3"/>
<path d="M2351.7 1145.3 L2366.7 1137.8 L2366.7 1152.8 Z" fill="#DDD"/>
<path d="M2761.2 1145.3 L2746.2 1137.8 L2746.2 1152.8 Z" fill="#DDD"/>
<text x="2372.6" y="1150.9" font-size="18.6" fill="#999" font-family='"Liberation Sans", sans-serif'><tspan textLength="55.8" lengthAdjust="spacingAndGlyphs">随机种</tspan></text>
<text x="2718.2" y="1150.9" font-size="18.6" fill="#DDD" text-anchor="end" font-family='"Liberation Sans", sans-serif'>966783603935492</text>
<rect x="2342.1" y="1165.4" width="428.1" height="30" rx="15" fill="#222" stroke="#666" stroke-width="1.3"/>
<path d="M2351.7 1181.3 L2366.7 1173.8 L2366.7 1188.8 Z" fill="#DDD"/>
<path d="M2761.2 1181.3 L2746.2 1173.8 L2746.2 1188.8 Z" fill="#DDD"/>
<text x="2372.6" y="1186.9" font-size="18.6" fill="#999" font-family='"Liberation Sans", sans-serif'><tspan textLength="93.0" lengthAdjust="spacingAndGlyphs">运行后操作</tspan></text>
<text x="2718.2" y="1186.9" font-size="18.6" fill="#DDD" text-anchor="end" font-family='"Liberation Sans", sans-serif'>randomize</text>
<rect x="2342.1" y="1201.4" width="428.1" height="30" rx="15" fill="#222" stroke="#666" stroke-width="1.3"/>
<path d="M2351.7 1217.3 L2366.7 1209.8 L2366.7 1224.8 Z" fill="#DDD"/>
<path d="M2761.2 1217.3 L2746.2 1209.8 L2746.2 1224.8 Z" fill="#DDD"/>
<text x="2372.6" y="1222.9" font-size="18.6" fill="#999" font-family='"Liberation Sans", sans-serif'><tspan textLength="37.2" lengthAdjust="spacingAndGlyphs">步数</tspan></text>
<text x="2718.2" y="1222.9" font-size="18.6" fill="#DDD" text-anchor="end" font-family='"Liberation Sans", sans-serif'>20</text>
<rect x="2342.1" y="1237.4" width="428.1" height="30" rx="15" fill="#222" stroke="#666" stroke-width="1.3"/>
<path d="M2351.7 1253.3 L2366.7 1245.8 L2366.7 1260.8 Z" fill="#DDD"/>
<path d="M2761.2 1253.3 L2746.2 1245.8 L2746.2 1260.8 Z" fill="#DDD"/>
<text x="2372.6" y="1258.9" font-size="18.6" fill="#999" font-family='"Liberation Sans", sans-serif'>CFG</text>
<text x="2718.2" y="1258.9" font-size="18.6" fill="#DDD" text-anchor="end" font-family='"Liberation Sans", sans-serif'>5.0</text>
<rect x="2342.1" y="1273.4" width="428.1" height="30" rx="15" fill="#222" stroke="#666" stroke-width="1.3"/>
<path d="M2351.7 1289.3 L2366.7 1281.8 L2366.7 1296.8 Z" fill="#DDD"/>
<path d="M2761.2 1289.3 L2746.2 1281.8 L2746.2 1296.8 Z" fill="#DDD"/>
<text x="2372.6" y="1294.9" font-size="18.6" fill="#999" font-family='"Liberation Sans", sans-serif'><tspan textLength="55.8" lengthAdjust="spacingAndGlyphs">采样器</tspan></text>
<text x="2718.2" y="1294.9" font-size="18.6" fill="#DDD" text-anchor="end" font-family='"Liberation Sans", sans-serif'>dpmpp_2m_sde_gpu</text>
<rect x="2342.1" y="1309.4" width="428.1" height="30" rx="15" fill="#222" stroke="#666" stroke-width="1.3"/>
<path d="M2351.7 1325.3 L2366.7 1317.8 L2366.7 1332.8 Z" fill="#DDD"/>
<path d="M2761.2 1325.3 L2746.2 1317.8 L2746.2 1332.8 Z" fill="#DDD"/>
<text x="2372.6" y="1330.9" font-size="18.6" fill="#999" font-family='"Liberation Sans", sans-serif'><tspan textLength="55.8" lengthAdjust="spacingAndGlyphs">调度器</tspan></text>
<text x="2718.2" y="1330.9" font-size="18.6" fill="#DDD" text-anchor="end" font-family='"Liberation Sans", sans-serif'>sgm_uniform</text>
<rect x="2342.1" y="1345.4" width="428.1" height="30" rx="15" fill="#222" stroke="#666" stroke-width="1.3"/>
<path d="M2351.7 1361.3 L2366.7 1353.8 L2366.7 1368.8 Z" fill="#DDD"/>
<path d="M2761.2 1361.3 L2746.2 1353.8 L2746.2 1368.8 Z" fill="#DDD"/>
<text x="2372.6" y="1366.9" font-size="18.6" fill="#999" font-family='"Liberation Sans", sans-serif'><tspan textLength="37.2" lengthAdjust="spacingAndGlyphs">降噪</tspan></text>
<text x="2718.2" y="1366.9" font-size="18.6" fill="#DDD" text-anchor="end" font-family='"Liberation Sans", sans-serif'>1.00</text>
<rect x="2750.1" y="923.4" width="39.4" height="29.3" rx="5" fill="#0F1F0F"/>
<text x="2758.9" y="944.7" font-size="19.6" fill="#FFF" font-family='"Liberation Sans", sans-serif'>#3</text>
<g filter="url(#sh)"><rect x="2861.2" y="969.1" width="314.7" height="113.0" rx="12" fill="#353535"/></g>
<path d="M2861.2 1014.1 L2861.2 981.1 Q2861.2 969.1 2873.2 969.1 L3163.9 969.1 Q3175.9 969.1 3175.9 981.1 L3175.9 1014.1 Z" fill="#333"/>
<rect x="2861.2" y="1013.6" width="314.7" height="1.5" fill="#2b2b2b"/>
<circle cx="2883.2" cy="991.3000000000001" r="7.5" fill="#6b6b6b"/>
<text x="2905.7" y="998.4" font-size="21.2" fill="#999" font-family='"Liberation Sans", sans-serif'>VAE<tspan textLength="42.4" lengthAdjust="spacingAndGlyphs">解码</tspan></text>
<circle cx="2875.7" cy="1034.4" r="6" fill="#FF9CF9"/>
<text x="2891.2" y="1041.7" font-size="18.4" fill="#AAA" font-family='"Liberation Sans", sans-serif'>Latent</text>
<circle cx="2875.7" cy="1064.4" r="6" fill="#FF6E6E"/>
<text x="2891.2" y="1071.7" font-size="18.4" fill="#AAA" font-family='"Liberation Sans", sans-serif'>VAE</text>
<circle cx="3161.4" cy="1034.4" r="6" fill="#64B5F6" stroke="#000" stroke-width="1.5"/>
<text x="3146.9" y="1041.7" font-size="18.4" fill="#AAA" text-anchor="end" font-family='"Liberation Sans", sans-serif'><tspan textLength="36.8" lengthAdjust="spacingAndGlyphs">图像</tspan></text>
<rect x="3132.8" y="936.0" width="39.4" height="29.3" rx="5" fill="#0F1F0F"/>
<text x="3141.6" y="957.3" font-size="19.6" fill="#FFF" font-family='"Liberation Sans", sans-serif'>#7</text>
<g filter="url(#sh)"><rect x="2865.2" y="1112.9" width="378.6" height="521.5" rx="12" fill="#353535"/></g>
<path d="M2865.2 1157.9 L2865.2 1124.9 Q2865.2 1112.9 2877.2 1112.9 L3231.8 1112.9 Q3243.8 1112.9 3243.8 1124.9 L3243.8 1157.9 Z" fill="#333"/>
<rect x="2865.2" y="1157.4" width="378.6" height="1.5" fill="#2b2b2b"/>
<circle cx="2887.2" cy="1135.1000000000001" r="7.5" fill="#6b6b6b"/>
<text x="2909.7" y="1142.2" font-size="21.2" fill="#999" font-family='"Liberation Sans", sans-serif'><tspan textLength="84.8" lengthAdjust="spacingAndGlyphs">保存图像</tspan></text>
<circle cx="2879.7" cy="1178.2" r="6" fill="#64B5F6"/>
<text x="2895.2" y="1185.5" font-size="18.4" fill="#AAA" font-family='"Liberation Sans", sans-serif'><tspan textLength="36.8" lengthAdjust="spacingAndGlyphs">图像</tspan></text>
<rect x="2886.7" y="1195.8" width="334.1" height="30" rx="15" fill="#222" stroke="#666" stroke-width="1.3"/>
<text x="2910.4" y="1217.3" font-size="18.6" fill="#999" font-family='"Liberation Sans", sans-serif'><tspan textLength="93.0" lengthAdjust="spacingAndGlyphs">文件名前缀</tspan></text>
<text x="3198.8" y="1217.3" font-size="18.6" fill="#DDD" text-anchor="end" font-family='"Liberation Sans", sans-serif'>ComfyUI</text>
<rect x="3200.7" y="1079.8" width="39.4" height="29.3" rx="5" fill="#0F1F0F"/>
<text x="3209.5" y="1101.1" font-size="19.6" fill="#FFF" font-family='"Liberation Sans", sans-serif'>#6</text>
<g filter="url(#sh)"><rect x="1207.8" y="638.2" width="447.5" height="196.6" rx="12" fill="#665533"/></g>
<path d="M1207.8 683.7 L1207.8 650.2 Q1207.8 638.2 1219.8 638.2 L1643.3 638.2 Q1655.3 638.2 1655.3 650.2 L1655.3 683.7 Z" fill="#433222"/>
<circle cx="1229.8" cy="660.4000000000001" r="7.5" fill="#6b6b6b"/>
<text x="1252.3" y="667.5" font-size="21.2" fill="#999" font-family='"Liberation Sans", sans-serif'><tspan textLength="42.4" lengthAdjust="spacingAndGlyphs">注释</tspan></text>
<rect x="1222.3" y="701.2" width="418.7" height="118.2" fill="#222"/>
<text x="1229.6" y="728.5" font-size="13.5" fill="#DDD" font-family='"Liberation Mono", monospace' xml:space="preserve"><tspan font-size="14.5" textLength="60.0" lengthAdjust="spacingAndGlyphs">缩放柔和</tspan><tspan textLength="90.0" lengthAdjust="spacingAndGlyphs"> ControlNet </tspan><tspan font-size="14.5" textLength="150.0" lengthAdjust="spacingAndGlyphs">权重节点可以设置类似</tspan><tspan textLength="75.0" lengthAdjust="spacingAndGlyphs"> SD WebUI </tspan><tspan font-size="14.5" textLength="15.0" lengthAdjust="spacingAndGlyphs">中</tspan></text>
<text x="1229.6" y="755.2" font-size="13.5" fill="#DDD" font-family='"Liberation Mono", monospace' xml:space="preserve"><tspan textLength="82.5" lengthAdjust="spacingAndGlyphs">ControlNet </tspan><tspan font-size="14.5" textLength="120.0" lengthAdjust="spacingAndGlyphs">控制模式，系数为</tspan><tspan textLength="22.5" lengthAdjust="spacingAndGlyphs"> 0 </tspan><tspan font-size="14.5" textLength="30.0" lengthAdjust="spacingAndGlyphs">时是</tspan><tspan textLength="82.5" lengthAdjust="spacingAndGlyphs"> ControlNet</tspan></text>
<text x="1229.6" y="781.9" font-size="13.5" fill="#DDD" font-family='"Liberation Mono", monospace' xml:space="preserve"><tspan font-size="14.5" textLength="105.0" lengthAdjust="spacingAndGlyphs">更重要，系数为</tspan><tspan textLength="22.5" lengthAdjust="spacingAndGlyphs"> 1 </tspan><tspan font-size="14.5" textLength="165.0" lengthAdjust="spacingAndGlyphs">为提示词更重要，系数为</tspan><tspan textLength="30.0" lengthAdjust="spacingAndGlyphs"> 0.5</tspan></text>
<text x="1229.6" y="808.6" font-size="13.5" fill="#DDD" font-family='"Liberation Mono", monospace' xml:space="preserve"><tspan font-size="14.5" textLength="90.0" lengthAdjust="spacingAndGlyphs">则是均衡模式</tspan></text>
<rect x="989" y="1093.2" width="601.3" height="200.4" fill="#222"/>
<text x="995.1" y="1119.8" font-size="14.5" fill="#DDD" font-family='"Liberation Mono", monospace' textLength="476.0" lengthAdjust="spacingAndGlyphs">welchino,  yanyo \(ogino atsuki\),  kita \(kitairoha\),  ciloranko,</text>
<text x="995.1" y="1146.7" font-size="14.5" fill="#DDD" font-family='"Liberation Mono", monospace' textLength="412.0" lengthAdjust="spacingAndGlyphs">1girl,solo,animal  ears,white  headwear,long  hair,holding</text>
<text x="995.1" y="1173.6" font-size="14.5" fill="#DDD" font-family='"Liberation Mono", monospace' textLength="515.8" lengthAdjust="spacingAndGlyphs">leaf,braid,holding hat,looking at viewer,autumn leaves,day,clock,maple</text>
<text x="995.1" y="1200.5" font-size="14.5" fill="#DDD" font-family='"Liberation Mono", monospace' textLength="524.7" lengthAdjust="spacingAndGlyphs">shoulder,black  bow,starry,white dress,jacket,brown  eyes,red  skirt,plaid</text>
<text x="995.1" y="1227.4" font-size="14.5" fill="#DDD" font-family='"Liberation Mono", monospace' textLength="531.6" lengthAdjust="spacingAndGlyphs">skirt,frills,dress,long  sleeves,hair  ornament,closed  mouth,ribbon,brown</text>
<text x="995.1" y="1254.3" font-size="14.5" fill="#DDD" font-family='"Liberation Mono", monospace' textLength="554.2" lengthAdjust="spacingAndGlyphs">jacket,yellow  eyes,blonde  hair,bare  shoulders,smile,blush,bow,hair  between</text>
<text x="995.1" y="1281.2" font-size="14.5" fill="#DDD" font-family='"Liberation Mono", monospace' textLength="32.8" lengthAdjust="spacingAndGlyphs">eyes,</text>
<text x="995.1" y="1173.6" font-size="14.5" fill="#DDD" font-family='"Liberation Mono", monospace' textLength="516.0" lengthAdjust="spacingAndGlyphs">cowboy shot,holding bat,maid dress,cat,skirt,plaid,day,clock,maple off</text>
<text x="995.1" y="1200.5" font-size="14.5" fill="#DDD" font-family='"Liberation Mono", monospace' textLength="365.0" lengthAdjust="spacingAndGlyphs">hair ribbon,belt,white leaf,jacket,brown</text>
<rect x="991.5" y="1460.1" width="607.3" height="200.3" fill="#222"/>
<text x="998.2" y="1487.0" font-size="14.5" fill="#DDD" font-family='"Liberation Mono", monospace' textLength="555.0" lengthAdjust="spacingAndGlyphs">low  quality,worst  quality,normal  quality,text,signature,jpeg  artifacts,bad</text>
<text x="998.2" y="1513.9" font-size="14.5" fill="#DDD" font-family='"Liberation Mono", monospace' textLength="535.0" lengthAdjust="spacingAndGlyphs">anatomy,old,early,copyright  name,watermark,artist  name,signature,fanbox,</text>
<clipPath id="imA"><rect x="277.2" y="471.2" width="247.7" height="329.2"/></clipPath>
<filter id="blimA" x="-10%" y="-10%" width="120%" height="120%"><feGaussianBlur stdDeviation="5"/></filter>
<g clip-path="url(#imA)"><g transform="translate(277.2,471.2) scale(0.22767,0.22751)" filter="url(#blimA)">
<rect x="-80" y="-80" width="1248" height="1607" fill="#b3d9f1"/>
<ellipse cx="560" cy="80" rx="200" ry="60" fill="#e2f1fb"/>
<polygon points="-80,380 340,370 345,540 -80,560" fill="#c6cad6"/>
<polygon points="20,420 120,415 120,500 20,505" fill="#8d98b0"/>
<polygon points="180,410 300,405 300,490 180,495" fill="#8d98b0"/>
<polygon points="-80,330 170,240 310,250 330,380 -80,420" fill="#4d93b6"/>
<polygon points="300,260 525,262 525,500 300,520" fill="#d3d4dc"/>
<polygon points="310,270 455,12 520,270" fill="#3d86a6"/>
<polygon points="400,300 470,300 470,420 400,420" fill="#eeeef2"/>
<polygon points="520,250 600,250 600,330 520,330" fill="#8a5a40"/>
<polygon points="880,-80 1170,-80 1170,1527 1000,1527 990,1050 900,700 880,400" fill="#868a96"/>
<ellipse cx="1070" cy="300" rx="50" ry="80" fill="#e8e8ec"/>
<polygon points="870,880 1050,860 1060,1140 880,1130" fill="#4c7c4a"/>
<polygon points="1000,1050 1170,1040 1170,1527 1010,1527" fill="#9a9aa2"/>
<polygon points="-80,470 140,370 300,380 560,480 560,640 420,760 330,1000 200,1160 -80,1170" fill="#e6b52f"/>
<polygon points="150,420 320,400 460,520 330,640 170,600" fill="#f0c850"/>
<polygon points="-80,960 300,960 300,1160 -80,1160" fill="#d9ad62"/>
<polygon points="-80,-80 500,-80 470,60 400,110 320,180 250,280 180,340 120,440 -80,450" fill="#e36c2c"/>
<polygon points="-80,-80 260,-80 230,100 120,200 -80,230" fill="#d4531f"/>
<polygon points="480,-80 680,-80 640,60 560,120 470,80" fill="#ea7434"/>
<polygon points="40,300 150,280 200,360 110,420 30,400" fill="#f08a30"/>
<polygon points="220,160 330,140 320,230 240,250" fill="#f39a4a"/>
<ellipse cx="330" cy="60" rx="40" ry="25" fill="#b8daf0"/><ellipse cx="180" cy="250" rx="30" ry="20" fill="#c0dcef"/><ellipse cx="400" cy="30" rx="30" ry="20" fill="#c8e2f2"/><ellipse cx="90" cy="120" rx="25" ry="18" fill="#e89a60"/>
<polygon points="60,360 150,330 230,380 170,440 80,430" fill="#d9502a"/>
<polygon points="900,-80 1170,-80 1170,170 960,150" fill="#e4703a"/>
<polygon points="930,390 1080,380 1040,500 960,490" fill="#e8562a"/>
<polygon points="380,140 455,15 520,270 330,270" fill="#3d86a6"/>
<polygon points="420,-80 470,-80 540,-80 560,60" fill="#e8763a"/>
<polygon points="-80,880 170,880 170,950 -80,960" fill="#3a3d4a"/>
<polygon points="60,760 150,760 160,1350 70,1350" fill="#2c303c"/>
<polygon points="-80,1160 620,1170 600,1527 -80,1527" fill="#bdb5b4"/>
<polygon points="600,1200 1000,1180 1010,1527 600,1527" fill="#a9a5aa"/>
<polygon points="560,200 660,90 800,60 940,110 1000,220 990,420 950,520 880,560 800,470 690,480 590,440 540,320" fill="#f5d898"/>
<polygon points="665,20 730,40 700,170 650,140" fill="#f2c98a"/>
<polygon points="930,150 1000,120 990,250 950,270" fill="#f2c98a"/>
<ellipse cx="800" cy="85" rx="150" ry="42" fill="#f3efec"/>
<ellipse cx="760" cy="390" rx="118" ry="100" fill="#fdeee6"/>
<ellipse cx="700" cy="330" rx="18" ry="22" fill="#e09030"/><ellipse cx="830" cy="360" rx="18" ry="22" fill="#e09030"/>
<polygon points="600,150 700,170 660,230" fill="#e85a28"/>
<polyline points="560,430 430,520 300,600 250,640" fill="none" stroke="#f1c47a" stroke-width="60" stroke-linecap="round" stroke-linejoin="round"/>
<polyline points="960,560 1030,680 1070,800" fill="none" stroke="#efc274" stroke-width="44" stroke-linecap="round" stroke-linejoin="round"/>
<polygon points="640,455 800,465 790,560 650,555" fill="#7c2118"/>
<ellipse cx="705" cy="505" rx="20" ry="22" fill="#e4ab2a"/>
<polygon points="540,500 800,480 790,740 540,740" fill="#f8f6f4"/>
<polygon points="520,500 560,500 560,600 520,600" fill="#fce4da"/>
<polygon points="380,560 540,620 500,800 300,830 130,820 90,700 330,650" fill="#5a2f28"/>
<polygon points="330,640 470,640 440,900 360,1010 180,1030 140,960 260,830" fill="#4e2a26"/>
<ellipse cx="70" cy="670" rx="55" ry="34" fill="#fde2d8"/>
<polygon points="760,560 1000,580 1010,700 960,820 990,1100 980,1360 900,1200 800,1000 740,760" fill="#5c3129"/>
<polygon points="500,740 700,740 720,880 650,980 460,1040 300,1060 220,1040 300,940 420,820" fill="#f5f1ef"/>
<polygon points="600,760 760,760 760,1010 640,1000" fill="#6c4b2c"/>
<ellipse cx="700" cy="780" rx="45" ry="60" fill="#e2b472"/>
<polygon points="330,1140 560,1240 680,1250 680,1527 280,1527" fill="#f2c6b4"/>
<polygon points="300,1250 460,1240 480,1527 260,1527" fill="#fbf3ee"/>
<polygon points="260,1060 560,965 760,1000 860,1120 900,1215 500,1232 300,1150" fill="#a3333b"/>
<polyline points="300,1100 860,1060" fill="none" stroke="#6e1c24" stroke-width="12" stroke-linecap="round" stroke-linejoin="round"/><polyline points="380,1180 880,1160" fill="none" stroke="#6e1c24" stroke-width="12" stroke-linecap="round" stroke-linejoin="round"/><polyline points="480,1000 560,1230" fill="none" stroke="#c85058" stroke-width="10" stroke-linecap="round" stroke-linejoin="round"/><polyline points="680,990 760,1220" fill="none" stroke="#c85058" stroke-width="10" stroke-linecap="round" stroke-linejoin="round"/>
<polygon points="330,1150 480,1230 950,1270 940,1300 470,1290 320,1200" fill="#f3ecec"/>
<polygon points="200,1060 310,1060 330,1170 220,1140" fill="#ece4e8"/>
<polygon points="760,1360 900,1320 1000,1527 740,1527" fill="#e8431f"/>
<polygon points="170,1170 250,1200 210,1290 160,1250" fill="#e86e2c"/>
</g></g>
<clipPath id="imB"><rect x="779.2" y="398.6" width="297.0" height="396.0"/></clipPath>
<g clip-path="url(#imB)"><g transform="translate(779.2,398.6) scale(0.27348,0.27367)">
<rect x="0" y="0" width="1086" height="1447" fill="#000"/>
<polyline points="73.6,191.9 73.0,160.9 45.1,147.4 74.3,137.2 78.6,106.5 97.4,131.1 127.9,125.7 110.2,151.2 124.8,178.5 95.1,169.6 73.6,191.9" fill="none" stroke="#7a7a7a" stroke-width="2.8" stroke-linecap="round" stroke-linejoin="round"/>
<polyline points="194.7,141.5 170.7,128.0 147.7,143.2 153.1,116.2 131.5,99.1 158.9,95.8 168.5,70.0 180.0,95.1 207.6,96.2 187.3,114.9 194.7,141.5" fill="none" stroke="#7a7a7a" stroke-width="2.8" stroke-linecap="round" stroke-linejoin="round"/>
<polyline points="217.5,128.9 246.4,140.1 269.6,119.5 267.8,150.4 294.6,166.1 264.6,174.0 258.0,204.3 241.2,178.2 210.4,181.3 229.9,157.3 217.5,128.9" fill="none" stroke="#7a7a7a" stroke-width="2.8" stroke-linecap="round" stroke-linejoin="round"/>
<polyline points="356.3,116.8 328.8,115.7 315.2,139.7 307.7,113.2 280.7,107.7 303.7,92.4 300.5,65.0 322.2,82.1 347.2,70.7 337.7,96.5 356.3,116.8" fill="none" stroke="#7a7a7a" stroke-width="2.8" stroke-linecap="round" stroke-linejoin="round"/>
<polyline points="162.1,227.2 186.9,219.0 191.0,193.1 206.5,214.2 232.3,210.0 217.1,231.3 229.0,254.5 204.1,246.6 185.6,265.2 185.5,239.0 162.1,227.2" fill="none" stroke="#7a7a7a" stroke-width="2.8" stroke-linecap="round" stroke-linejoin="round"/>
<polyline points="99.6,268.4 105.0,244.9 86.7,229.4 110.7,227.3 119.8,205.0 129.2,227.2 153.2,229.0 135.0,244.8 140.7,268.2 120.1,255.7 99.6,268.4" fill="none" stroke="#7a7a7a" stroke-width="2.8" stroke-linecap="round" stroke-linejoin="round"/>
<polyline points="327.6,273.6 300.1,274.9 288.6,300.0 278.9,274.2 251.6,271.1 273.1,253.9 267.6,226.9 290.6,242.0 314.6,228.5 307.3,255.0 327.6,273.6" fill="none" stroke="#7a7a7a" stroke-width="2.8" stroke-linecap="round" stroke-linejoin="round"/>
<polyline points="345.2,163.4 366.4,152.0 366.0,127.9 383.4,144.6 406.2,136.8 395.7,158.5 410.2,177.7 386.3,174.4 372.5,194.2 368.2,170.4 345.2,163.4" fill="none" stroke="#7a7a7a" stroke-width="2.8" stroke-linecap="round" stroke-linejoin="round"/>
<polyline points="574.1,67.8 550.4,71.9 543.1,94.9 531.9,73.5 507.8,73.7 524.6,56.5 517.0,33.6 538.6,44.3 558.0,30.0 554.5,53.8 574.1,67.8" fill="none" stroke="#7a7a7a" stroke-width="2.8" stroke-linecap="round" stroke-linejoin="round"/>
<polyline points="577.4,59.5 593.0,38.5 581.4,15.0 606.2,23.3 624.9,5.0 624.7,31.2 647.9,43.4 622.9,51.2 618.5,77.0 603.3,55.7 577.4,59.5" fill="none" stroke="#7a7a7a" stroke-width="2.8" stroke-linecap="round" stroke-linejoin="round"/>
<polyline points="686.5,136.3 659.0,135.6 645.8,159.8 638.0,133.4 610.9,128.3 633.6,112.7 630.0,85.4 651.9,102.1 676.8,90.3 667.6,116.3 686.5,136.3" fill="none" stroke="#7a7a7a" stroke-width="2.8" stroke-linecap="round" stroke-linejoin="round"/>
<polyline points="609.9,188.1 586.1,184.5 572.0,204.1 568.1,180.3 545.1,172.9 566.5,161.8 566.4,137.7 583.6,154.7 606.5,147.1 595.7,168.7 609.9,188.1" fill="none" stroke="#7a7a7a" stroke-width="2.8" stroke-linecap="round" stroke-linejoin="round"/>
<polyline points="593.5,247.9 605.6,229.5 594.8,210.3 616.0,216.2 630.9,199.9 631.9,221.9 652.0,231.1 631.4,238.9 628.9,260.8 615.1,243.5 593.5,247.9" fill="none" stroke="#7a7a7a" stroke-width="2.8" stroke-linecap="round" stroke-linejoin="round"/>
<polyline points="537.4,210.9 540.4,231.4 559.9,238.0 541.4,247.2 541.1,267.9 526.7,253.1 506.9,259.2 516.5,240.9 504.6,224.0 525.0,227.5 537.4,210.9" fill="none" stroke="#7a7a7a" stroke-width="2.8" stroke-linecap="round" stroke-linejoin="round"/>
<polyline points="82.1,340.3 62.7,333.2 47.5,347.3 48.2,326.6 30.2,316.6 50.1,310.9 54.0,290.6 65.6,307.7 86.1,305.3 73.4,321.5 82.1,340.3" fill="none" stroke="#7a7a7a" stroke-width="2.8" stroke-linecap="round" stroke-linejoin="round"/>
<polyline points="1009.2,458.9 993.0,436.6 965.8,440.8 982.1,418.5 969.7,393.9 995.9,402.5 1015.5,383.1 1015.4,410.7 1039.9,423.3 1013.6,431.7 1009.2,458.9" fill="none" stroke="#7a7a7a" stroke-width="2.8" stroke-linecap="round" stroke-linejoin="round"/>
<polyline points="931.6,499.6 955.1,505.0 970.6,486.7 972.7,510.7 995.0,519.8 972.8,529.2 971.0,553.2 955.2,535.0 931.8,540.7 944.3,520.1 931.6,499.6" fill="none" stroke="#7a7a7a" stroke-width="2.8" stroke-linecap="round" stroke-linejoin="round"/>
<polyline points="20,60 140,130 260,200 380,330" fill="none" stroke="#7a7a7a" stroke-width="2.8" stroke-linecap="round" stroke-linejoin="round"/>
<polyline points="150,300 220,260 300,300" fill="none" stroke="#7a7a7a" stroke-width="2.8" stroke-linecap="round" stroke-linejoin="round"/>
<polyline points="430,60 390,200 330,460 300,700" fill="none" stroke="#7a7a7a" stroke-width="2.8" stroke-linecap="round" stroke-linejoin="round"/>
<polyline points="390,190 520,240 520,330 500,520" fill="none" stroke="#7a7a7a" stroke-width="2.8" stroke-linecap="round" stroke-linejoin="round"/>
<polyline points="360,460 500,520" fill="none" stroke="#7a7a7a" stroke-width="2.8" stroke-linecap="round" stroke-linejoin="round"/>
<polyline points="400,260 500,290" fill="none" stroke="#7a7a7a" stroke-width="2.8" stroke-linecap="round" stroke-linejoin="round"/>
<polyline points="400,295 500,325" fill="none" stroke="#7a7a7a" stroke-width="2.8" stroke-linecap="round" stroke-linejoin="round"/>
<polyline points="400,330 500,360" fill="none" stroke="#7a7a7a" stroke-width="2.8" stroke-linecap="round" stroke-linejoin="round"/>
<polyline points="400,365 500,395" fill="none" stroke="#7a7a7a" stroke-width="2.8" stroke-linecap="round" stroke-linejoin="round"/>
<polyline points="400,400 500,430" fill="none" stroke="#7a7a7a" stroke-width="2.8" stroke-linecap="round" stroke-linejoin="round"/>
<polyline points="400,435 500,465" fill="none" stroke="#7a7a7a" stroke-width="2.8" stroke-linecap="round" stroke-linejoin="round"/>
<polyline points="400,60 520,130" fill="none" stroke="#7a7a7a" stroke-width="2.8" stroke-linecap="round" stroke-linejoin="round"/>
<polyline points="10,400 170,420 170,540 10,520 10,400" fill="none" stroke="#7a7a7a" stroke-width="2.8" stroke-linecap="round" stroke-linejoin="round"/>
<polyline points="40,410 40,530" fill="none" stroke="#7a7a7a" stroke-width="2.8" stroke-linecap="round" stroke-linejoin="round"/>
<polyline points="75,410 75,530" fill="none" stroke="#7a7a7a" stroke-width="2.8" stroke-linecap="round" stroke-linejoin="round"/>
<polyline points="110,410 110,530" fill="none" stroke="#7a7a7a" stroke-width="2.8" stroke-linecap="round" stroke-linejoin="round"/>
<polyline points="145,410 145,530" fill="none" stroke="#7a7a7a" stroke-width="2.8" stroke-linecap="round" stroke-linejoin="round"/>
<polyline points="0,380 190,390 200,330" fill="none" stroke="#7a7a7a" stroke-width="2.8" stroke-linecap="round" stroke-linejoin="round"/>
<polyline points="620,240 680,140 780,95 880,105 960,160 1000,260 980,380 920,450 820,470 700,440 620,370 600,300 620,240" fill="none" stroke="#7a7a7a" stroke-width="2.8" stroke-linecap="round" stroke-linejoin="round"/>
<polyline points="660,150 700,25 760,115" fill="none" stroke="#7a7a7a" stroke-width="2.8" stroke-linecap="round" stroke-linejoin="round"/>
<polyline points="920,150 1000,120 965,270" fill="none" stroke="#7a7a7a" stroke-width="2.8" stroke-linecap="round" stroke-linejoin="round"/>
<polyline points="690,170 730,300 700,430" fill="none" stroke="#7a7a7a" stroke-width="2.8" stroke-linecap="round" stroke-linejoin="round"/>
<polyline points="850,130 870,300 830,440" fill="none" stroke="#7a7a7a" stroke-width="2.8" stroke-linecap="round" stroke-linejoin="round"/>
<polyline points="760,110 780,250 760,330" fill="none" stroke="#7a7a7a" stroke-width="2.8" stroke-linecap="round" stroke-linejoin="round"/>
<polyline points="800,120 640,420" fill="none" stroke="#7a7a7a" stroke-width="2.8" stroke-linecap="round" stroke-linejoin="round"/>
<polyline points="663,320 685,294 717,298 727,320 705,346 673,342 663,320" fill="none" stroke="#7a7a7a" stroke-width="2.8" stroke-linecap="round" stroke-linejoin="round"/>
<polyline points="685,314 705,314 705,330 685,330 685,314" fill="none" stroke="#7a7a7a" stroke-width="2.8" stroke-linecap="round" stroke-linejoin="round"/>
<polyline points="798,355 820,329 852,333 862,355 840,381 808,377 798,355" fill="none" stroke="#7a7a7a" stroke-width="2.8" stroke-linecap="round" stroke-linejoin="round"/>
<polyline points="820,349 840,349 840,365 820,365 820,349" fill="none" stroke="#7a7a7a" stroke-width="2.8" stroke-linecap="round" stroke-linejoin="round"/>
<polyline points="900,240 960,255 950,300 905,290" fill="none" stroke="#7a7a7a" stroke-width="2.8" stroke-linecap="round" stroke-linejoin="round"/>
<polyline points="700,400 760,420" fill="none" stroke="#7a7a7a" stroke-width="2.8" stroke-linecap="round" stroke-linejoin="round"/>
<polyline points="630,460 700,520 800,470" fill="none" stroke="#7a7a7a" stroke-width="2.8" stroke-linecap="round" stroke-linejoin="round"/>
<polyline points="680,500 720,500 720,540 680,540 680,500" fill="none" stroke="#7a7a7a" stroke-width="2.8" stroke-linecap="round" stroke-linejoin="round"/>
<polyline points="560,440 520,450 500,485 540,480 560,440" fill="none" stroke="#7a7a7a" stroke-width="2.8" stroke-linecap="round" stroke-linejoin="round"/>
<polyline points="505,472 465,482 445,517 485,512 505,472" fill="none" stroke="#7a7a7a" stroke-width="2.8" stroke-linecap="round" stroke-linejoin="round"/>
<polyline points="450,504 410,514 390,549 430,544 450,504" fill="none" stroke="#7a7a7a" stroke-width="2.8" stroke-linecap="round" stroke-linejoin="round"/>
<polyline points="395,536 355,546 335,581 375,576 395,536" fill="none" stroke="#7a7a7a" stroke-width="2.8" stroke-linecap="round" stroke-linejoin="round"/>
<polyline points="340,568 300,578 280,613 320,608 340,568" fill="none" stroke="#7a7a7a" stroke-width="2.8" stroke-linecap="round" stroke-linejoin="round"/>
<polyline points="285,600 245,610 225,645 265,640 285,600" fill="none" stroke="#7a7a7a" stroke-width="2.8" stroke-linecap="round" stroke-linejoin="round"/>
<polyline points="230,632 190,642 170,677 210,672 230,632" fill="none" stroke="#7a7a7a" stroke-width="2.8" stroke-linecap="round" stroke-linejoin="round"/>
<polyline points="560,470 600,560 560,700 430,820 270,1000" fill="none" stroke="#7a7a7a" stroke-width="2.8" stroke-linecap="round" stroke-linejoin="round"/>
<polyline points="800,460 860,620 900,820 950,1000 900,1100" fill="none" stroke="#7a7a7a" stroke-width="2.8" stroke-linecap="round" stroke-linejoin="round"/>
<polyline points="600,560 800,560" fill="none" stroke="#7a7a7a" stroke-width="2.8" stroke-linecap="round" stroke-linejoin="round"/>
<polyline points="590,600 620,760 580,900" fill="none" stroke="#7a7a7a" stroke-width="2.8" stroke-linecap="round" stroke-linejoin="round"/>
<polyline points="720,520 760,800 740,1000" fill="none" stroke="#7a7a7a" stroke-width="2.8" stroke-linecap="round" stroke-linejoin="round"/>
<polyline points="560,700 760,720" fill="none" stroke="#7a7a7a" stroke-width="2.8" stroke-linecap="round" stroke-linejoin="round"/>
<polyline points="650,760 760,860 700,980" fill="none" stroke="#7a7a7a" stroke-width="2.8" stroke-linecap="round" stroke-linejoin="round"/>
<polyline points="700,760 720,830" fill="none" stroke="#7a7a7a" stroke-width="2.8" stroke-linecap="round" stroke-linejoin="round"/>
<polyline points="20,660 80,640 150,650 330,580 480,590 520,620" fill="none" stroke="#7a7a7a" stroke-width="2.8" stroke-linecap="round" stroke-linejoin="round"/>
<polyline points="40,720 200,760 420,820 520,760" fill="none" stroke="#7a7a7a" stroke-width="2.8" stroke-linecap="round" stroke-linejoin="round"/>
<polyline points="20,660 60,700 40,720" fill="none" stroke="#7a7a7a" stroke-width="2.8" stroke-linecap="round" stroke-linejoin="round"/>
<polyline points="60,680 100,690" fill="none" stroke="#7a7a7a" stroke-width="2.8" stroke-linecap="round" stroke-linejoin="round"/>
<polyline points="120,650 130,740" fill="none" stroke="#7a7a7a" stroke-width="2.8" stroke-linecap="round" stroke-linejoin="round"/>
<polyline points="180,640 200,760" fill="none" stroke="#7a7a7a" stroke-width="2.8" stroke-linecap="round" stroke-linejoin="round"/>
<polyline points="200,560 330,500 450,460 560,420" fill="none" stroke="#7a7a7a" stroke-width="2.8" stroke-linecap="round" stroke-linejoin="round"/>
<polyline points="820,600 960,560 1000,660 940,760 980,1000 940,1280" fill="none" stroke="#7a7a7a" stroke-width="2.8" stroke-linecap="round" stroke-linejoin="round"/>
<polyline points="790,640 830,900 880,1100 860,1300" fill="none" stroke="#7a7a7a" stroke-width="2.8" stroke-linecap="round" stroke-linejoin="round"/>
<polyline points="880,580 940,700 900,860" fill="none" stroke="#7a7a7a" stroke-width="2.8" stroke-linecap="round" stroke-linejoin="round"/>
<polyline points="980,650 1060,700 1080,880" fill="none" stroke="#7a7a7a" stroke-width="2.8" stroke-linecap="round" stroke-linejoin="round"/>
<polyline points="140,1020 200,1060 260,1050 320,1100 400,1100 460,1160 540,1180 600,1230 680,1220 760,1260 850,1250 950,1280" fill="none" stroke="#7a7a7a" stroke-width="2.8" stroke-linecap="round" stroke-linejoin="round"/>
<polyline points="160,990 240,1010 300,980 360,1020" fill="none" stroke="#7a7a7a" stroke-width="2.8" stroke-linecap="round" stroke-linejoin="round"/>
<polyline points="260,1100 300,1200 340,1180 420,1240 480,1230 540,1270" fill="none" stroke="#7a7a7a" stroke-width="2.8" stroke-linecap="round" stroke-linejoin="round"/>
<polyline points="400,1080 460,1100" fill="none" stroke="#7a7a7a" stroke-width="2.8" stroke-linecap="round" stroke-linejoin="round"/>
<polyline points="480,1000 540,1160" fill="none" stroke="#7a7a7a" stroke-width="2.8" stroke-linecap="round" stroke-linejoin="round"/>
<polyline points="600,1000 660,1200" fill="none" stroke="#7a7a7a" stroke-width="2.8" stroke-linecap="round" stroke-linejoin="round"/>
<polyline points="560,1050 620,1050" fill="none" stroke="#7a7a7a" stroke-width="2.8" stroke-linecap="round" stroke-linejoin="round"/>
<polyline points="700,1050 760,1230" fill="none" stroke="#7a7a7a" stroke-width="2.8" stroke-linecap="round" stroke-linejoin="round"/>
<polyline points="750,1180 800,1220 850,1200 900,1240" fill="none" stroke="#7a7a7a" stroke-width="2.8" stroke-linecap="round" stroke-linejoin="round"/>
<polyline points="40,1200 300,1280 290,1447" fill="none" stroke="#7a7a7a" stroke-width="2.8" stroke-linecap="round" stroke-linejoin="round"/>
<polyline points="470,1240 420,1447" fill="none" stroke="#7a7a7a" stroke-width="2.8" stroke-linecap="round" stroke-linejoin="round"/>
<polyline points="680,1260 640,1447" fill="none" stroke="#7a7a7a" stroke-width="2.8" stroke-linecap="round" stroke-linejoin="round"/>
<polyline points="60,980 20,1447" fill="none" stroke="#7a7a7a" stroke-width="2.8" stroke-linecap="round" stroke-linejoin="round"/>
<polyline points="30,1250 300,1290" fill="none" stroke="#7a7a7a" stroke-width="2.8" stroke-linecap="round" stroke-linejoin="round"/>
<polyline points="40,1200 30,1250" fill="none" stroke="#7a7a7a" stroke-width="2.8" stroke-linecap="round" stroke-linejoin="round"/>
<polyline points="540,1270 500,1447" fill="none" stroke="#7a7a7a" stroke-width="2.8" stroke-linecap="round" stroke-linejoin="round"/>
<polyline points="760,1300 900,1330 960,1447" fill="none" stroke="#7a7a7a" stroke-width="2.8" stroke-linecap="round" stroke-linejoin="round"/>
<polyline points="1000,180 1060,1447" fill="none" stroke="#7a7a7a" stroke-width="2.8" stroke-linecap="round" stroke-linejoin="round"/>
<polyline points="940,400 1000,1447" fill="none" stroke="#7a7a7a" stroke-width="2.8" stroke-linecap="round" stroke-linejoin="round"/>
<polyline points="1040,250 1040,700" fill="none" stroke="#7a7a7a" stroke-width="2.8" stroke-linecap="round" stroke-linejoin="round"/>
<polyline points="1020,1000 1080,1010" fill="none" stroke="#7a7a7a" stroke-width="2.8" stroke-linecap="round" stroke-linejoin="round"/>
<polyline points="960,1100 1080,1110" fill="none" stroke="#7a7a7a" stroke-width="2.8" stroke-linecap="round" stroke-linejoin="round"/>
<polyline points="1060,230 1086,300" fill="none" stroke="#7a7a7a" stroke-width="2.8" stroke-linecap="round" stroke-linejoin="round"/>
<polyline points="1050,320 1080,400" fill="none" stroke="#7a7a7a" stroke-width="2.8" stroke-linecap="round" stroke-linejoin="round"/>
<polyline points="0,940 140,960 220,1000" fill="none" stroke="#7a7a7a" stroke-width="2.8" stroke-linecap="round" stroke-linejoin="round"/>
<polyline points="60,780 120,800 140,900 100,960" fill="none" stroke="#7a7a7a" stroke-width="2.8" stroke-linecap="round" stroke-linejoin="round"/>
</g></g>
<clipPath id="imC"><rect x="2432.9" y="1382.3" width="247.4" height="329.6"/></clipPath>
<filter id="blimC" x="-10%" y="-10%" width="120%" height="120%"><feGaussianBlur stdDeviation="18"/></filter>
<g clip-path="url(#imC)"><g transform="translate(2432.9,1382.3) scale(0.22656,0.22778)" filter="url(#blimC)">
<rect x="-80" y="-80" width="1252" height="1607" fill="#c88e6c"/>
<polygon points="-80,-80 520,-80 460,400 200,560 -80,600" fill="#bf7a55"/>
<polygon points="300,90 560,60 500,600 360,900 -80,1120 -80,820 220,600" fill="#cdb6b0"/>
<polygon points="-80,950 360,900 310,1527 -80,1527" fill="#a9b1c6"/>
<polygon points="520,60 660,-80 730,-80 640,260 540,250" fill="#a9c9e8"/>
<polygon points="850,1000 1170,950 1170,1527 700,1527" fill="#cfc8d2"/>
<polygon points="600,60 900,60 1000,300 945,520 640,500 560,300" fill="#e8d4c8"/>
<ellipse cx="780" cy="350" rx="130" ry="120" fill="#f3dbd0"/>
<polygon points="620,450 780,460 760,540 640,540" fill="#a24a32"/>
<polygon points="500,520 822,520 782,762 882,1062 332,1052 462,762" fill="#e7e1ea"/>
<polygon points="120,680 420,580 522,622 482,822 160,802" fill="#7b6b6a"/>
<polygon points="760,560 992,602 972,902 942,1282 832,1082 742,762" fill="#6f5f61"/>
<polygon points="270,1060 600,1000 862,1082 882,1202 500,1232 300,1152" fill="#8d4d3d"/>
<polygon points="300,1152 700,1232 702,1527 300,1527" fill="#e7bfa8"/>
<polygon points="330,1250 470,1260 450,1390 320,1380" fill="#f6dcc8"/>
</g></g>
<clipPath id="imD"><rect x="2903.8" y="1232.9" width="301.8" height="401.5"/></clipPath>
<filter id="blimD" x="-10%" y="-10%" width="120%" height="120%"><feGaussianBlur stdDeviation="6"/></filter>
<g clip-path="url(#imD)"><g transform="translate(2903.8,1232.9) scale(0.27739,0.27747)" filter="url(#blimD)">
<rect x="-80" y="-80" width="1248" height="1607" fill="#e9953f"/>
<polygon points="480,-80 1170,-80 1170,40 900,70 700,60 620,290 520,280" fill="#90c4ee"/>
<polygon points="-80,-80 700,-80 660,40 560,110 470,70 380,240 300,300 260,420 -80,430" fill="#d45e28"/>
<polygon points="-80,-80 280,-80 250,120 180,240 -80,260" fill="#a9502c"/>
<polygon points="300,-80 520,-80 480,60 340,100" fill="#e4562a"/>
<polygon points="40,250 210,230 240,400 120,430 30,400" fill="#e5b640"/>
<polygon points="860,-80 1170,-80 1170,140 1000,120 900,60" fill="#ec9a4c"/>
<polygon points="960,130 1170,100 1170,1000 960,1000" fill="#ee9438"/>
<polygon points="1010,150 1170,150 1170,420 1020,400" fill="#d7702e"/>
<polygon points="60,420 290,400 300,600 200,700 60,600" fill="#f2d2b2"/>
<polygon points="-80,430 60,420 60,1000 -80,1000" fill="#e58c3a"/>
<polygon points="320,290 470,60 540,270 545,300" fill="#bdb0ac"/>
<polygon points="280,260 545,260 565,700 300,760 270,520" fill="#d7c7b7"/>
<ellipse cx="440" cy="360" rx="42" ry="42" fill="#f3efeb"/>
<ellipse cx="330" cy="370" rx="10" ry="30" fill="#f3efeb"/>
<polygon points="-80,1000 300,1000 330,1527 -80,1527" fill="#b9c3d2"/>
<polygon points="30,780 120,780 110,1400 20,1400" fill="#8090a8"/>
<polygon points="180,700 300,700 300,1000 160,1000" fill="#e59c58"/>
<polygon points="680,1260 1170,1040 1170,1527 680,1527" fill="#d2d9e2"/>
<polygon points="860,730 1170,730 1170,1040 900,1060" fill="#eaa055"/>
<ellipse cx="785" cy="150" rx="175" ry="100" fill="#f0edf4"/>
<polygon points="655,35 765,105 690,230" fill="#e6b27a"/>
<polygon points="925,140 1015,112 988,300" fill="#e6b27a"/>
<polygon points="550,230 640,160 780,170 900,210 985,320 975,470 930,560 860,610 640,540 550,420" fill="#ebcd93"/>
<ellipse cx="772" cy="385" rx="110" ry="90" fill="#fbe7dc"/>
<ellipse cx="712" cy="330" rx="20" ry="25" fill="#e6a02e"/><ellipse cx="836" cy="355" rx="20" ry="25" fill="#e6a02e"/>
<polygon points="640,250 820,230 880,300 760,290 680,330" fill="#ebcd93"/>
<polyline points="550,370 430,470 310,560 210,640" fill="none" stroke="#e3c384" stroke-width="58" stroke-linecap="round" stroke-linejoin="round"/>
<polygon points="262,530 345,540 340,640 275,640" fill="#d84832"/>
<polyline points="960,640 1050,720 1070,840" fill="none" stroke="#e8c274" stroke-width="48" stroke-linecap="round" stroke-linejoin="round"/>
<polygon points="958,790 1040,790 1020,905 972,905" fill="#d8382a"/>
<polygon points="628,445 792,452 772,562 648,555" fill="#d43322"/>
<ellipse cx="706" cy="515" rx="26" ry="26" fill="#c09026"/>
<polygon points="905,380 1060,402 1005,505 918,472" fill="#de3e22"/>
<ellipse cx="958" cy="552" rx="34" ry="52" fill="#f9dcd0"/>
<polygon points="495,500 560,490 560,625 495,625" fill="#fbe2d4"/>
<polygon points="780,492 872,512 862,592 780,592" fill="#fbe2d4"/>
<polygon points="530,490 785,490 778,740 760,1000 430,1020 285,960 462,762" fill="#f2eff5"/>
<polygon points="270,880 800,940 812,1062 255,1072" fill="#e7cbcb"/>
<polygon points="100,655 300,650 400,575 522,600 502,805 400,865 120,850" fill="#665241"/>
<polygon points="230,862 498,832 480,952 250,962" fill="#c29a8c"/>
<ellipse cx="60" cy="675" rx="62" ry="32" fill="#f6dcc8"/>
<polygon points="760,560 995,592 1002,735 955,880 982,1345 902,1205 800,1005 730,762" fill="#5b4a3d"/>
<polygon points="250,1070 560,995 860,1062 905,1232 500,1245 300,1152" fill="#b43c28"/>
<polyline points="320,1112 862,1102" fill="none" stroke="#5e1a14" stroke-width="12" stroke-linecap="round" stroke-linejoin="round"/><polyline points="380,1192 882,1197" fill="none" stroke="#5e1a14" stroke-width="12" stroke-linecap="round" stroke-linejoin="round"/><polyline points="470,1010 540,1238" fill="none" stroke="#e05c3a" stroke-width="10" stroke-linecap="round" stroke-linejoin="round"/><polyline points="690,1022 760,1238" fill="none" stroke="#e05c3a" stroke-width="10" stroke-linecap="round" stroke-linejoin="round"/>
<polygon points="380,1152 722,1152 702,1252 380,1252" fill="#d9ab62"/>
<polygon points="700,1222 930,1232 920,1292 700,1292" fill="#c9a9b9"/>
<polygon points="262,1140 522,1215 682,1250 692,1527 300,1527" fill="#f1c2a4"/>
<polygon points="310,1250 462,1255 452,1382 300,1372" fill="#fde6da"/>
<polygon points="135,1170 240,1190 220,1290" fill="#e8731f"/>
</g></g>
<defs><linearGradient id="icg" x1="0" y1="0" x2="1" y2="1"><stop offset="0" stop-color="#5ab4fa"/><stop offset="1" stop-color="#3f7fe6"/></linearGradient></defs>
<rect x="2021.5" y="178.3" width="20.9" height="20.6" rx="1.5" fill="url(#icg)"/>
<g fill="#f4f0ff"><rect x="2025.3" y="182.5" width="4.3" height="5.5"/><rect x="2032.5" y="181.5" width="5.3" height="2.3"/><path d="M2033 184 L2037.8 184 L2037.8 187 Q2035.4 188.5 2033 187 Z"/><path d="M2025 191.5 L2031 190 L2033.5 189.6 L2033.5 192.5 L2025 193 Z"/><rect x="2032.2" y="190.5" width="6.5" height="5.5"/></g>
<circle cx="2055.2" cy="188.4" r="7.6" fill="#a6a6a6"/>
<circle cx="2073.7" cy="188.4" r="7.6" fill="#a6a6a6"/>
<circle cx="2091.9" cy="188.4" r="7.6" fill="#a6a6a6"/>
<g fill="none" stroke="#222" stroke-width="0.9"><path d="M2051.4 193.7 L2055.3 183.5 L2059.3 193.7 M2052.9 189.6 L2057.8 189.6"/><path d="M2077 184.6 A4.4 5 0 1 0 2077 192.2"/><path d="M2088.6 193.7 L2088.6 183.5 L2095.3 193.7 L2095.3 183.5"/></g>
</svg></body></html>
